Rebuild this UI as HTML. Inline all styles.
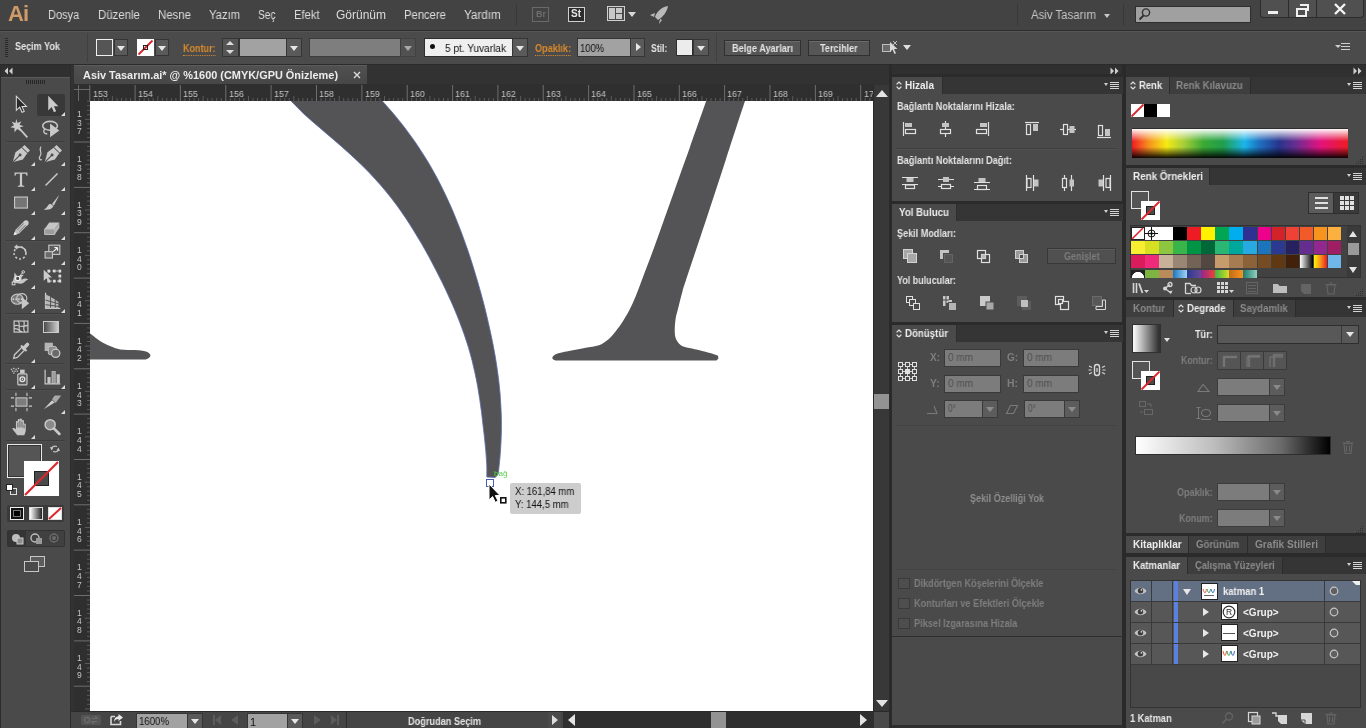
<!DOCTYPE html>
<html lang="tr"><head><meta charset="utf-8"><title>Asiv Tasarım.ai</title>
<style>
html,body{margin:0;padding:0}
body{width:1366px;height:728px;overflow:hidden;background:#4a4a4a;position:relative;font-family:"Liberation Sans",sans-serif;font-size:11px;color:#dcdcdc}
.a{position:absolute}
.t{position:absolute;white-space:nowrap;line-height:1;color:#dedede;transform-origin:0 0;will-change:transform}
.b{font-weight:bold}
.dim{color:#8c8c8c}
svg{position:absolute;overflow:visible}
.dd{position:absolute;background:#5a5a5a;border:1px solid #353535;box-sizing:border-box}
.dd:after{content:"";position:absolute;left:50%;top:50%;margin:-2px 0 0 -4px;border:4px solid transparent;border-top:5px solid #e6e6e6;border-bottom:0}
.fld{position:absolute;background:#a2a2a2;border:1px solid #353535;box-sizing:border-box}
.fldd{position:absolute;background:#7e7e7e;border:1px solid #3d3d3d;box-sizing:border-box}
.btn{position:absolute;border:1px solid #303030;background:#565656;box-sizing:border-box;box-shadow:inset 0 1px 0 #6a6a6a}
.ph{position:absolute;background:#383838;height:16px}
.tab{position:absolute;background:#4a4a4a;height:17px;top:0}
.hl{position:absolute;height:1px;background:#3a3a3a}
</style></head><body>
<!-- MENU BAR -->
<div class="a" style="left:0;top:0;width:1366px;height:30px;background:#434343"></div>
<div class="a" style="left:0;top:30px;width:1366px;height:1px;background:#2c2c2c"></div>
<div class="t b" style="left:8px;top:3px;font-size:22px;color:#cf9a68;letter-spacing:-1px">Ai</div>
<div class="t" style="transform:scaleX(0.920);left:47.5px;top:8.6px;font-size:12px;color:#dcdcdc;">Dosya</div>
<div class="t" style="transform:scaleX(0.952);left:97.5px;top:8.6px;font-size:12px;color:#dcdcdc;">Düzenle</div>
<div class="t" style="transform:scaleX(0.951);left:158.0px;top:8.6px;font-size:12px;color:#dcdcdc;">Nesne</div>
<div class="t" style="transform:scaleX(0.942);left:209.0px;top:8.6px;font-size:12px;color:#dcdcdc;">Yazım</div>
<div class="t" style="transform:scaleX(0.841);left:258.4px;top:8.6px;font-size:12px;color:#dcdcdc;">Seç</div>
<div class="t" style="transform:scaleX(0.936);left:293.7px;top:8.6px;font-size:12px;color:#dcdcdc;">Efekt</div>
<div class="t" style="transform:scaleX(0.993);left:336.3px;top:8.6px;font-size:12px;color:#dcdcdc;">Görünüm</div>
<div class="t" style="transform:scaleX(0.937);left:404.4px;top:8.6px;font-size:12px;color:#dcdcdc;">Pencere</div>
<div class="t" style="transform:scaleX(0.974);left:464.2px;top:8.6px;font-size:12px;color:#dcdcdc;">Yardım</div>
<div class="a" style="left:516px;top:4px;width:1px;height:22px;background:#383838"></div>
<!-- Br / St -->
<div class="a" style="left:532px;top:7px;width:15px;height:13px;border:1px solid #6a6a6a"></div>
<div class="t b" style="left:536px;top:10px;font-size:9px;color:#6e6e6e">Br</div>
<div class="a" style="left:568px;top:7px;width:15px;height:13px;border:1px solid #cfcfcf;background:#2c2c2c"></div>
<div class="t b" style="left:571px;top:9px;font-size:10px;color:#e6e6e6">St</div>
<!-- arrange docs -->
<div class="a" style="left:607px;top:6px;width:16px;height:13px;border:1px solid #d0d0d0;background:#4a4a4a"></div>
<div class="a" style="left:609px;top:8px;width:6px;height:11px;background:#c8c8c8"></div>
<div class="a" style="left:616px;top:8px;width:6px;height:5px;background:#c8c8c8"></div>
<div class="a" style="left:616px;top:14px;width:6px;height:5px;background:#c8c8c8"></div>
<div class="a" style="left:628px;top:12px;border:4px solid transparent;border-top:5px solid #d8d8d8;border-bottom:0"></div>
<!-- rocket -->
<svg style="left:648px;top:5px" width="22" height="20" viewBox="0 0 22 20"><path d="M20 1 C14 2 9 6 7 12 L10 15 C15 12 19 7 20 1Z M7 8 L2 10 L6 12Z M12 14 L11 19 L14 15Z" fill="#b9b9b9"/></svg>
<!-- workspace -->
<div class="a" style="left:1017px;top:4px;width:1px;height:22px;background:#383838"></div>
<div class="t" style="transform:scaleX(0.949);left:1030.5px;top:8.6px;font-size:12px;color:#c4c4c4;">Asiv Tasarım</div>
<div class="a" style="left:1104px;top:14px;border:3px solid transparent;border-top:4px solid #c8c8c8;border-bottom:0"></div>
<div class="a" style="left:1123px;top:4px;width:1px;height:22px;background:#383838"></div>
<div class="a" style="left:1135px;top:6px;width:116px;height:17px;background:#a0a0a0;border:1px solid #2e2e2e;box-sizing:border-box"></div>
<svg style="left:1138px;top:7px" width="14" height="14" viewBox="0 0 14 14"><circle cx="8" cy="5.5" r="3.6" fill="none" stroke="#2e2e2e" stroke-width="1.4"/><path d="M5.5 8.5 L1.5 12.5" stroke="#2e2e2e" stroke-width="1.8"/></svg>
<!-- window buttons -->
<div class="a" style="left:1260px;top:0;width:104px;height:18px;background:#505050;border:1px solid #2c2c2c;border-top:0;border-radius:0 0 4px 4px;box-sizing:border-box"></div>
<div class="a" style="left:1288px;top:0;width:1px;height:17px;background:#2c2c2c"></div>
<div class="a" style="left:1316px;top:0;width:1px;height:17px;background:#2c2c2c"></div>
<div class="a" style="left:1268px;top:11px;width:10px;height:3px;background:#f0f0f0"></div>
<div class="a" style="left:1296px;top:8px;width:7px;height:5px;border:2px solid #f0f0f0;box-sizing:content-box"></div>
<div class="a" style="left:1300px;top:4px;width:7px;height:5px;border:2px solid #f0f0f0;border-left:0;border-bottom:0"></div>
<svg style="left:1334px;top:3px" width="12" height="12" viewBox="0 0 12 12"><path d="M1 1 L11 11 M11 1 L1 11" stroke="#f4f4f4" stroke-width="2.4"/></svg>

<!-- CONTROL BAR -->
<div class="a" style="left:0;top:31px;width:1366px;height:34px;background:#4b4b4b"></div>
<div class="a" style="left:0;top:31px;width:1366px;height:1px;background:#565656"></div>
<div class="a" style="left:0;top:64px;width:1366px;height:1px;background:#2b2b2b"></div>
<div class="a" style="left:5px;top:38px;width:3px;height:19px;background:repeating-linear-gradient(#2a2a2a 0 1px,transparent 1px 2px)"></div>
<div class="t b" style="transform:scaleX(0.906);left:15.0px;top:41.7px;font-size:10px;color:#e4e4e4;">Seçim Yok</div>
<div class="a" style="left:87px;top:33px;width:1px;height:29px;background:#404040"></div>
<div class="a" style="left:96px;top:39px;width:17px;height:17px;box-sizing:border-box;border:1px solid #efefef;background:#555"></div>
<div class="dd" style="left:114px;top:39px;width:14px;height:17px"></div>
<div class="a" style="left:137px;top:39px;width:17px;height:17px;background:#fff"></div>
<svg style="left:137px;top:39px" width="17" height="17" viewBox="0 0 17 17"><path d="M1.5 15.5 L15.5 1.5" stroke="#d8232a" stroke-width="1.8"/><rect x="6.5" y="6.5" width="4" height="4" fill="none" stroke="#222" stroke-width="1"/></svg>
<div class="dd" style="left:155px;top:39px;width:14px;height:17px"></div>
<div class="t b" style="transform:scaleX(0.900);left:183.0px;top:43.8px;font-size:10px;color:#d98a2c;border-bottom:1px dotted #d98a2c;padding-bottom:1px">Kontur:</div>
<div class="a" style="left:222px;top:38px;width:17px;height:19px;background:#555;border:1px solid #353535;box-sizing:border-box"></div>
<div class="a" style="left:226px;top:41px;border:4px solid transparent;border-bottom:4px solid #ddd;border-top:0"></div>
<div class="a" style="left:226px;top:50px;border:4px solid transparent;border-top:4px solid #ddd;border-bottom:0"></div>
<div class="fld" style="left:239px;top:38px;width:48px;height:19px"></div>
<div class="dd" style="left:286px;top:38px;width:16px;height:19px"></div>
<div class="fldd" style="left:309px;top:38px;width:92px;height:19px"></div>
<div class="dd" style="left:400px;top:38px;width:16px;height:19px;background:#565656;border-color:#3d3d3d;opacity:.6"></div>
<div class="a" style="left:424px;top:38px;width:89px;height:19px;background:#efefef;border:1px solid #2e2e2e;box-sizing:border-box"></div>
<div class="a" style="left:430px;top:44px;width:5px;height:5px;border-radius:3px;background:#111"></div>
<div class="t" style="transform:scaleX(0.918);left:445.0px;top:43.0px;font-size:11px;color:#111;">5 pt. Yuvarlak</div>
<div class="dd" style="left:512px;top:38px;width:16px;height:19px"></div>
<div class="t b" style="transform:scaleX(0.912);left:535.0px;top:43.8px;font-size:10px;color:#d98a2c;border-bottom:1px dotted #d98a2c;padding-bottom:1px">Opaklık:</div>
<div class="fld" style="left:577px;top:38px;width:54px;height:19px"></div>
<div class="t" style="transform:scaleX(0.860);left:580.4px;top:42.7px;font-size:11px;color:#111;">100%</div>
<div class="a" style="left:630px;top:38px;width:15px;height:19px;background:#5a5a5a;border:1px solid #353535;box-sizing:border-box"></div>
<div class="a" style="left:636px;top:43px;border:4px solid transparent;border-left:5px solid #e6e6e6;border-right:0"></div>
<div class="t b" style="transform:scaleX(0.863);left:651.0px;top:43.8px;font-size:10px;color:#e4e4e4;">Stil:</div>
<div class="a" style="left:676px;top:39px;width:17px;height:17px;background:#ececec;border:1px solid #2e2e2e;box-sizing:border-box"></div>
<div class="dd" style="left:693px;top:39px;width:16px;height:17px"></div>
<div class="a" style="left:716px;top:33px;width:1px;height:29px;background:#404040"></div>
<div class="btn" style="left:724px;top:40px;width:77px;height:16px"></div>
<div class="t b" style="transform:scaleX(0.917);left:731.5px;top:43.8px;font-size:10px;color:#e4e4e4;">Belge Ayarları</div>
<div class="btn" style="left:808px;top:40px;width:62px;height:16px"></div>
<div class="t b" style="transform:scaleX(0.908);left:820.3px;top:43.8px;font-size:10px;color:#e4e4e4;">Tercihler</div>
<svg style="left:881px;top:40px" width="18" height="16" viewBox="0 0 18 16"><rect x="1.5" y="4.500" width="8" height="7" fill="#6a6a6a" stroke="#bdbdbd"/><path d="M9 2 L9 12 L11.500 9.500 L13.500 14 L15 13.300 L13 9 L16.500 9Z" fill="#d8d8d8"/><path d="M12 1 L16 5 M16 1 L12 5" stroke="#bdbdbd" stroke-width="1"/></svg>
<div class="a" style="left:903px;top:45px;border:4px solid transparent;border-top:5px solid #e0e0e0;border-bottom:0"></div>
<!-- far right menu icon -->
<div class="a" style="left:1335px;top:45px;border:3px solid transparent;border-top:3px solid #d0d0d0;border-bottom:0"></div>
<div class="a" style="left:1341px;top:43px;width:9px;height:9px;background:repeating-linear-gradient(#d0d0d0 0 1px,transparent 1px 3px)"></div>
<!-- TOOLS PANEL -->
<div class="a" style="left:0;top:65px;width:71px;height:663px;background:#4a4a4a"></div>
<div class="a" style="left:0;top:65px;width:71px;height:12px;background:#303030"></div>
<div class="a" style="left:0;top:65px;width:1px;height:663px;background:#2c2c2c"></div>
<div class="a" style="left:70px;top:65px;width:1px;height:663px;background:#2c2c2c"></div>
<div class="a" style="left:1px;top:77px;width:69px;height:1px;background:#5a5a5a"></div>
<svg style="left:4px;top:67px" width="10" height="8" viewBox="0 0 10 8"><path d="M4 0.500V7.500L0.500 4ZM8.500 0.500V7.500L5 4Z" fill="#d0d0d0"/></svg>
<div class="a" style="left:26px;top:80px;width:19px;height:4px;background:repeating-linear-gradient(90deg,#262626 0 1px,transparent 1px 2px)"></div>
<div class="a" style="left:37px;top:94px;width:28px;height:22px;background:#383838;border-radius:2px"></div>
<div class="a" style="left:6px;top:141px;width:59px;height:1px;background:#3c3c3c"></div>
<div class="a" style="left:6px;top:142px;width:59px;height:1px;background:#4f4f4f"></div>
<div class="a" style="left:6px;top:240px;width:59px;height:1px;background:#3c3c3c"></div>
<div class="a" style="left:6px;top:241px;width:59px;height:1px;background:#4f4f4f"></div>
<div class="a" style="left:6px;top:313px;width:59px;height:1px;background:#3c3c3c"></div>
<div class="a" style="left:6px;top:314px;width:59px;height:1px;background:#4f4f4f"></div>
<div class="a" style="left:6px;top:363px;width:59px;height:1px;background:#3c3c3c"></div>
<div class="a" style="left:6px;top:364px;width:59px;height:1px;background:#4f4f4f"></div>
<div class="a" style="left:6px;top:389px;width:59px;height:1px;background:#3c3c3c"></div>
<div class="a" style="left:6px;top:390px;width:59px;height:1px;background:#4f4f4f"></div>
<div class="a" style="left:6px;top:440px;width:59px;height:1px;background:#3c3c3c"></div>
<div class="a" style="left:6px;top:441px;width:59px;height:1px;background:#4f4f4f"></div>
<svg style="left:8px;top:92px" width="24" height="24" viewBox="0 0 24 24"><g transform="translate(12 12) scale(.92) translate(-12 -12)"><path d="M8 3.500V19L11.700 15.500L14.200 21L16.600 20L14.200 14.700H19Z" fill="#2a2a2a" stroke="#dcdcdc" stroke-width="1.100"/></g></svg>
<svg style="left:39px;top:92px" width="24" height="24" viewBox="0 0 24 24"><g transform="translate(12 12) scale(.92) translate(-12 -12)"><path d="M9 3V19L12.700 15.300L15.200 21L17.600 20L15.200 14.500H20Z" fill="#cacaca"/></g></svg>
<svg style="left:60.5px;top:111.5px" width="4" height="4" viewBox="0 0 4 4"><path d="M4 0V4H0Z" fill="#dcdcdc"/></svg>
<svg style="left:8px;top:117px" width="24" height="24" viewBox="0 0 24 24"><g transform="translate(12 12) scale(.92) translate(-12 -12)"><path d="M10 10L20 21" stroke="#c6c6c6" stroke-width="2"/><path d="M8 1L9.300 5.500L13.500 3.500L11.500 7.500L16 9L11.500 10.300L13 14.500L9 12L6 15.500L6 11L1.500 10L5.500 8L3 4L7 5.500Z" fill="#cccccc"/></g></svg>
<svg style="left:39px;top:117px" width="24" height="24" viewBox="0 0 24 24"><g transform="translate(12 12) scale(.92) translate(-12 -12)"><ellipse cx="11" cy="8.500" rx="8" ry="4.800" fill="none" stroke="#c6c6c6" stroke-width="1.700"/><path d="M5 12C3 15 5 18 8 17" fill="none" stroke="#c6c6c6" stroke-width="1.500"/><path d="M11 6V21L21 13.500Z" fill="#c8c8c8"/></g></svg>
<svg style="left:9px;top:142px" width="24" height="24" viewBox="0 0 24 24"><g transform="translate(12 12) scale(.92) translate(-12 -12)"><path d="M3 21L6 10L13 5L19 11L14 18Z" fill="#c8c8c8"/><path d="M3 21L10.500 13.500" stroke="#4a4a4a" stroke-width="1.200"/><circle cx="11" cy="13" r="1.600" fill="#4a4a4a"/><path d="M14.500 3.500L20.500 9.500" stroke="#c8c8c8" stroke-width="3.600"/><path d="M13.200 5.200L18.800 10.800" stroke="#4a4a4a" stroke-width="1"/></g></svg>
<svg style="left:30.5px;top:161.5px" width="4" height="4" viewBox="0 0 4 4"><path d="M4 0V4H0Z" fill="#dcdcdc"/></svg>
<svg style="left:41px;top:142px" width="24" height="24" viewBox="0 0 24 24"><g transform="translate(12 12) scale(.92) translate(-12 -12)"><path d="M3 21L6 10L13 5L19 11L14 18Z" fill="#c8c8c8"/><path d="M3 21L10.500 13.500" stroke="#4a4a4a" stroke-width="1.200"/><circle cx="11" cy="13" r="1.600" fill="#4a4a4a"/><path d="M14.500 3.500L20.500 9.500" stroke="#c8c8c8" stroke-width="3.600"/><path d="M13.200 5.200L18.800 10.800" stroke="#4a4a4a" stroke-width="1"/><path d="M4 2C1 6 6 8 3 12C1 15 3 17 5 16" fill="none" stroke="#c8c8c8" stroke-width="1.300" transform="translate(-5,2)"/></g></svg>
<svg style="left:60.5px;top:161.5px" width="4" height="4" viewBox="0 0 4 4"><path d="M4 0V4H0Z" fill="#dcdcdc"/></svg>
<svg style="left:9px;top:167px" width="24" height="24" viewBox="0 0 24 24"><g transform="translate(12 12) scale(.92) translate(-12 -12)"><path d="M5 5H19V8.500H18C17.800 7 17.200 6.300 16 6.300H13.200V18C13.200 19 13.800 19.300 15.500 19.400V20.500H8.500V19.400C10.200 19.300 10.800 19 10.800 18V6.300H8C6.800 6.300 6.200 7 6 8.500H5Z" fill="#cacaca"/></g></svg>
<svg style="left:30.5px;top:186.5px" width="4" height="4" viewBox="0 0 4 4"><path d="M4 0V4H0Z" fill="#dcdcdc"/></svg>
<svg style="left:40px;top:167px" width="24" height="24" viewBox="0 0 24 24"><g transform="translate(12 12) scale(.92) translate(-12 -12)"><path d="M5 19L18 6" stroke="#cacaca" stroke-width="1.600"/></g></svg>
<svg style="left:60.5px;top:186.5px" width="4" height="4" viewBox="0 0 4 4"><path d="M4 0V4H0Z" fill="#dcdcdc"/></svg>
<svg style="left:9px;top:191px" width="24" height="24" viewBox="0 0 24 24"><g transform="translate(12 12) scale(.92) translate(-12 -12)"><rect x="5" y="5.500" width="14" height="12" fill="#757575" stroke="#c6c6c6" stroke-width="1.200"/></g></svg>
<svg style="left:30.5px;top:210.5px" width="4" height="4" viewBox="0 0 4 4"><path d="M4 0V4H0Z" fill="#dcdcdc"/></svg>
<svg style="left:40px;top:191px" width="24" height="24" viewBox="0 0 24 24"><g transform="translate(12 12) scale(.92) translate(-12 -12)"><path d="M20 3L12 13L14 15Z" fill="#c8c8c8"/><path d="M11.500 13.500L13.500 15.500C12 19 7 20 3 19C6 18 7 15 8.500 13.500C9.500 12.800 10.800 12.800 11.500 13.500Z" fill="#c8c8c8"/></g></svg>
<svg style="left:60.5px;top:210.5px" width="4" height="4" viewBox="0 0 4 4"><path d="M4 0V4H0Z" fill="#dcdcdc"/></svg>
<svg style="left:9px;top:216px" width="24" height="24" viewBox="0 0 24 24"><g transform="translate(12 12) scale(.92) translate(-12 -12)"><path d="M4 20L6 14L15 5L19 9L10 18Z" fill="#bdbdbd"/><path d="M4 20L5.200 16.200L7.800 18.800Z" fill="#eee"/><circle cx="17.500" cy="6.500" r="2.800" fill="#cccccc"/><path d="M8 14L15 7M10 16L17 9" stroke="#777" stroke-width="1"/></g></svg>
<svg style="left:30.5px;top:235.5px" width="4" height="4" viewBox="0 0 4 4"><path d="M4 0V4H0Z" fill="#dcdcdc"/></svg>
<svg style="left:40px;top:216px" width="24" height="24" viewBox="0 0 24 24"><g transform="translate(12 12) scale(.92) translate(-12 -12)"><path d="M4 13L9 6H20L15 13Z" fill="#c6c6c6"/><path d="M4 13H15V19H4Z" fill="#9c9c9c" stroke="#c6c6c6" stroke-width="1"/><path d="M15 13L20 6V12L15 19Z" fill="#b4b4b4"/></g></svg>
<svg style="left:60.5px;top:235.5px" width="4" height="4" viewBox="0 0 4 4"><path d="M4 0V4H0Z" fill="#dcdcdc"/></svg>
<svg style="left:8px;top:241px" width="24" height="24" viewBox="0 0 24 24"><g transform="translate(12 12) scale(.92) translate(-12 -12)"><circle cx="12" cy="12" r="6.500" fill="none" stroke="#c6c6c6" stroke-width="1.700" stroke-dasharray="2.200 2.200"/><path d="M12 5.500A6.500 6.500 0 0 1 18.500 12" fill="none" stroke="#c6c6c6" stroke-width="1.800"/><path d="M7 2.500V8.500L3.500 5.500Z" fill="#cacaca" transform="translate(2,0)"/><path d="M8 5.500H12" stroke="#c6c6c6" stroke-width="1.800"/></g></svg>
<svg style="left:30.5px;top:260.5px" width="4" height="4" viewBox="0 0 4 4"><path d="M4 0V4H0Z" fill="#dcdcdc"/></svg>
<svg style="left:40px;top:241px" width="24" height="24" viewBox="0 0 24 24"><g transform="translate(12 12) scale(.92) translate(-12 -12)"><rect x="8.500" y="3.500" width="12" height="10" fill="#5c5c5c" stroke="#c8c8c8" stroke-width="1.200"/><rect x="4.500" y="10.500" width="8" height="7" fill="#6a6a6a" stroke="#c8c8c8" stroke-width="1.200"/><path d="M13.500 10.500L18 6M18 6H14.500M18 6V9.500" stroke="#f0f0f0" stroke-width="1.300" fill="none"/></g></svg>
<svg style="left:60.5px;top:260.5px" width="4" height="4" viewBox="0 0 4 4"><path d="M4 0V4H0Z" fill="#dcdcdc"/></svg>
<svg style="left:8px;top:265px" width="24" height="24" viewBox="0 0 24 24"><g transform="translate(12 12) scale(.92) translate(-12 -12)"><path d="M3 19C5 15 6 12 6 7C8 9 9 11 9 13C11 10 14 9 16 10C14 11 13 13 14 15C16 13 19 13 21 15C18 15 17 19 14 19C10 20 7 17 3 19Z" fill="#c6c6c6"/><circle cx="9.500" cy="13.500" r="2.300" fill="#4a4a4a" stroke="#eee" stroke-width="1.200"/><path d="M11 12L15 7" stroke="#ddd" stroke-width="1"/><circle cx="15.500" cy="6.500" r="1.400" fill="none" stroke="#ddd"/><rect x="3.500" y="17.500" width="3" height="3" fill="#4a4a4a" stroke="#ddd"/></g></svg>
<svg style="left:30.5px;top:284.5px" width="4" height="4" viewBox="0 0 4 4"><path d="M4 0V4H0Z" fill="#dcdcdc"/></svg>
<svg style="left:40px;top:265px" width="24" height="24" viewBox="0 0 24 24"><g transform="translate(12 12) scale(.92) translate(-12 -12)"><rect x="8.500" y="5.500" width="12" height="11" fill="none" stroke="#c6c6c6" stroke-width="1.200" stroke-dasharray="2 2"/><g fill="#dcdcdc"><rect x="7" y="4" width="3" height="3"/><rect x="19" y="4" width="3" height="3"/><rect x="7" y="15" width="3" height="3"/><rect x="19" y="15" width="3" height="3"/><rect x="13" y="4" width="3" height="3"/><rect x="13" y="15" width="3" height="3"/><rect x="19" y="9.500" width="3" height="3"/></g><path d="M3 4V16L6 13.300L8 17.500L10 16.600L8 12.500H12Z" fill="#cccccc"/></g></svg>
<svg style="left:8px;top:289px" width="24" height="24" viewBox="0 0 24 24"><g transform="translate(12 12) scale(.92) translate(-12 -12)"><ellipse cx="9" cy="10" rx="6.500" ry="5.500" fill="#7a7a7a" stroke="#c6c6c6" stroke-width="1.200"/><ellipse cx="14" cy="9" rx="5.500" ry="5" fill="none" stroke="#c6c6c6" stroke-width="1.200"/><path d="M4 10H15" stroke="#eee" stroke-width="1.500" stroke-dasharray="1.500 1.500"/><path d="M14 8V21L22 14.500Z" fill="#c8c8c8"/></g></svg>
<svg style="left:30.5px;top:308.5px" width="4" height="4" viewBox="0 0 4 4"><path d="M4 0V4H0Z" fill="#dcdcdc"/></svg>
<svg style="left:40px;top:289px" width="24" height="24" viewBox="0 0 24 24"><g transform="translate(12 12) scale(.92) translate(-12 -12)"><path d="M5 3V20H21" fill="none" stroke="#cacaca" stroke-width="1.400"/><path d="M5 5L10 7V20H5ZM11 8L15 10V20H11ZM16 11L19 13V20H16Z" fill="#b9b9b9"/><path d="M5 11L19 15M5 16L20 18" stroke="#4a4a4a" stroke-width="1"/></g></svg>
<svg style="left:60.5px;top:308.5px" width="4" height="4" viewBox="0 0 4 4"><path d="M4 0V4H0Z" fill="#dcdcdc"/></svg>
<svg style="left:9px;top:315px" width="24" height="24" viewBox="0 0 24 24"><g transform="translate(12 12) scale(.92) translate(-12 -12)"><rect x="4.500" y="5.500" width="15" height="12" fill="none" stroke="#cacaca" stroke-width="1.300"/><path d="M4.500 11C8 8 11 14 19.500 10M9 5.500C12 9 8 13 11 17.500M15 5.500C17 9 13 13 16 17.500M4.500 14C8 13 10 16 13 17.500" fill="none" stroke="#cacaca" stroke-width="1.300"/></g></svg>
<div class="a" style="left:43px;top:321px;width:16px;height:12px;border:1px solid #cacaca;box-sizing:border-box;background:linear-gradient(90deg,#4a4a4a,#cccccc)"></div>
<svg style="left:9px;top:339px" width="24" height="24" viewBox="0 0 24 24"><g transform="translate(12 12) scale(.92) translate(-12 -12)"><path d="M4 20L5 16L13 8L16 11L8 19Z" fill="none" stroke="#c8c8c8" stroke-width="1.400"/><path d="M12 6L18 12" stroke="#c8c8c8" stroke-width="2.200"/><path d="M15 9L19 5" stroke="#c8c8c8" stroke-width="4" stroke-linecap="round"/></g></svg>
<svg style="left:30.5px;top:358.5px" width="4" height="4" viewBox="0 0 4 4"><path d="M4 0V4H0Z" fill="#dcdcdc"/></svg>
<svg style="left:40px;top:339px" width="24" height="24" viewBox="0 0 24 24"><g transform="translate(12 12) scale(.92) translate(-12 -12)"><rect x="4" y="3" width="9" height="9" fill="#b4b4b4"/><rect x="8" y="7" width="9" height="9" rx="2" fill="#8c8c8c" stroke="#c6c6c6"/><circle cx="16" cy="14.500" r="4.500" fill="#6a6a6a" stroke="#cacaca" stroke-width="1.400"/></g></svg>
<svg style="left:9px;top:365px" width="24" height="24" viewBox="0 0 24 24"><g transform="translate(12 12) scale(.92) translate(-12 -12)"><rect x="8.500" y="8.500" width="10" height="12" rx="1" fill="#5c5c5c" stroke="#c8c8c8" stroke-width="1.300"/><rect x="11" y="4" width="5" height="4" fill="#c8c8c8"/><circle cx="13.500" cy="14.500" r="2.600" fill="none" stroke="#e4e4e4" stroke-width="1.400"/><circle cx="13.500" cy="14.500" r=".8" fill="#eee"/><g fill="#cccccc"><rect x="1" y="3" width="1.400" height="1.400"/><rect x="3.500" y="2" width="1.400" height="1.400"/><rect x="6" y="3" width="1.400" height="1.400"/><rect x="2.200" y="5" width="1.400" height="1.400"/><rect x="4.800" y="5" width="1.400" height="1.400"/><rect x="7.300" y="5" width="1.400" height="1.400"/><rect x="3.500" y="7" width="1.400" height="1.400"/><rect x="8.500" y="2" width="1.400" height="1.400"/></g></g></svg>
<svg style="left:30.5px;top:384.5px" width="4" height="4" viewBox="0 0 4 4"><path d="M4 0V4H0Z" fill="#dcdcdc"/></svg>
<svg style="left:40px;top:365px" width="24" height="24" viewBox="0 0 24 24"><g transform="translate(12 12) scale(.92) translate(-12 -12)"><path d="M4.500 4V19.500H21" fill="none" stroke="#cacaca" stroke-width="1.300"/><rect x="7" y="12" width="3.500" height="7" fill="#c6c6c6"/><rect x="12" y="6" width="3.500" height="13" fill="#9a9a9a" stroke="#c6c6c6" stroke-width=".8"/><rect x="17" y="9" width="3.500" height="10" fill="#c6c6c6"/></g></svg>
<svg style="left:60.5px;top:384.5px" width="4" height="4" viewBox="0 0 4 4"><path d="M4 0V4H0Z" fill="#dcdcdc"/></svg>
<svg style="left:9px;top:390px" width="24" height="24" viewBox="0 0 24 24"><g transform="translate(12 12) scale(.92) translate(-12 -12)"><rect x="6.500" y="7.500" width="12" height="9" fill="#7c7c7c" stroke="#cacaca" stroke-width="1.100"/><path d="M1 7.500H4.500M20.500 7.500H24M1 16.500H4.500M20.500 16.500H24M6.500 2V5.500M18.500 2V5.500M6.500 18.500V22M18.500 18.500V22" stroke="#cacaca" stroke-width="1.200"/></g></svg>
<svg style="left:40px;top:390px" width="24" height="24" viewBox="0 0 24 24"><g transform="translate(12 12) scale(.92) translate(-12 -12)"><path d="M3 20L12 10L15 12.500Z" fill="#cccccc"/><path d="M12 9L15 5H22L16 13Z" fill="#a8a8a8"/></g></svg>
<svg style="left:60.5px;top:409.5px" width="4" height="4" viewBox="0 0 4 4"><path d="M4 0V4H0Z" fill="#dcdcdc"/></svg>
<svg style="left:9px;top:415px" width="24" height="24" viewBox="0 0 24 24"><g transform="translate(12 12) scale(.92) translate(-12 -12)"><path d="M8 21C6 18 4 16 2.500 13.500C3.500 12.500 5 13 6.500 14.500V6.500C6.500 5 8.500 5 8.500 6.500V4.500C8.500 3 10.700 3 10.700 4.500V4C10.700 2.500 13 2.500 13 4V5.500C13 4 15.200 4 15.200 5.500V9C15.200 7.800 17.200 7.800 17.200 9V15C17.200 18 16 19.500 15.500 21Z" fill="#c6c6c6"/><path d="M8.600 7V12.500M10.800 5V12.500M13.100 6V12.500M15.300 9.500V13.500" stroke="#4a4a4a" stroke-width=".9"/></g></svg>
<svg style="left:30.5px;top:434.5px" width="4" height="4" viewBox="0 0 4 4"><path d="M4 0V4H0Z" fill="#dcdcdc"/></svg>
<svg style="left:40px;top:415px" width="24" height="24" viewBox="0 0 24 24"><g transform="translate(12 12) scale(.92) translate(-12 -12)"><circle cx="10" cy="9.500" r="5.500" fill="#8a8a8a" stroke="#c8c8c8" stroke-width="1.600"/><path d="M14 13.500L20 19.500" stroke="#c8c8c8" stroke-width="3" stroke-linecap="round"/></g></svg>
<div class="a" style="left:7px;top:444px;width:35px;height:34px;box-sizing:border-box;border:1px solid #e8e8e8;background:#555;box-shadow:inset 0 0 0 1px #333"></div>
<div class="a" style="left:24px;top:461px;width:35px;height:35px;background:#fff"></div>
<div class="a" style="left:34px;top:471px;width:15px;height:15px;background:#4a4a4a;border:1px solid #222;box-sizing:border-box"></div>
<svg style="left:24px;top:461px" width="35" height="35" viewBox="0 0 35 35"><path d="M1 34L34 1" stroke="#e0242c" stroke-width="2.200"/></svg>
<svg style="left:49px;top:443px" width="12" height="12" viewBox="0 0 12 12"><path d="M2.500 6C2.500 3.500 5 2.500 8 3.500M9.500 6C9.500 8.500 7 9.500 4 8.500" fill="none" stroke="#c8c8c8" stroke-width="1.200"/><path d="M1 4L2.500 7.500L4.500 4.500ZM11 8L9.500 4.500L7.500 7.500Z" fill="#c8c8c8"/></svg>
<div class="a" style="left:10px;top:488px;width:7px;height:7px;background:#4a4a4a;border:1px solid #e0e0e0;box-sizing:border-box"></div>
<div class="a" style="left:6px;top:484px;width:7px;height:7px;background:#fff;border:1px solid #222;box-sizing:border-box"></div>
<div class="a" style="left:7px;top:505px;width:57px;height:17px;background:#3a3a3a;border-radius:2px"></div>
<div class="a" style="left:10px;top:507px;width:14px;height:13px;background:#111;border:1px solid #eee;box-sizing:border-box"></div>
<div class="a" style="left:13px;top:510px;width:8px;height:7px;background:#000;border:1px solid #777;box-sizing:border-box"></div>
<div class="a" style="left:29px;top:507px;width:14px;height:13px;background:linear-gradient(90deg,#fff,#222);border:1px solid #ddd;box-sizing:border-box"></div>
<div class="a" style="left:48px;top:507px;width:14px;height:13px;background:#fff;border:1px solid #ddd;box-sizing:border-box"></div>
<svg style="left:48px;top:507px" width="14" height="13" viewBox="0 0 14 13"><path d="M1 12L13 1" stroke="#e0242c" stroke-width="2"/></svg>
<div class="a" style="left:7px;top:530px;width:58px;height:17px;background:#404040;border:1px solid #323232;box-sizing:border-box;border-radius:2px"></div>
<div class="a" style="left:8px;top:531px;width:18px;height:15px;background:#343434"></div>
<svg style="left:9px;top:531px" width="56" height="15" viewBox="0 0 56 15"><circle cx="7" cy="7" r="4" fill="#bdbdbd"/><rect x="8" y="7" width="6" height="6" fill="#8c8c8c" stroke="#cccccc"/><circle cx="26" cy="7" r="4" fill="none" stroke="#bdbdbd" stroke-width="1.400"/><rect x="27" y="7" width="6" height="6" fill="#9a9a9a"/><circle cx="45" cy="7" r="4" fill="none" stroke="#6a6a6a" stroke-width="1.400"/><circle cx="45" cy="7" r="2" fill="#6a6a6a"/></svg>
<div class="a" style="left:30px;top:556px;width:15px;height:11px;background:#5c5c5c;border:1px solid #c6c6c6;box-sizing:border-box"></div>
<div class="a" style="left:24px;top:561px;width:15px;height:11px;background:#4a4a4a;border:1px solid #c6c6c6;box-sizing:border-box"></div>
<!-- DOCUMENT AREA -->
<div class="a" style="left:71px;top:65px;width:821px;height:663px;background:#323232"></div>
<div class="a" style="left:74px;top:65px;width:293px;height:19px;background:linear-gradient(#505050,#474747);border-top:1px solid #5c5c5c;box-sizing:border-box"></div>
<div class="t b" style="transform:scaleX(1.040);left:82.5px;top:70.0px;font-size:10.5px;color:#ececec;">Asiv Tasarım.ai* @ %1600 (CMYK/GPU Önizleme)</div>
<svg style="left:353px;top:71px" width="8" height="8" viewBox="0 0 8 8"><path d="M1 1 L7 7 M7 1 L1 7" stroke="#e0e0e0" stroke-width="1.3"/></svg>
<div class="a" style="left:74px;top:84px;width:800px;height:17px;background:#2f2f2f"></div>
<div class="a" style="left:74px;top:101px;width:16px;height:610px;background:#2f2f2f"></div>
<div class="a" style="left:90px;top:101px;width:784px;height:610px;background:#fff"></div>
<svg style="left:0;top:0" width="1366" height="728"><path d="M89.8 85V101M135.1 85V101M180.4 85V101M225.8 85V101M271.1 85V101M316.5 85V101M361.9 85V101M407.2 85V101M452.6 85V101M497.9 85V101M543.2 85V101M588.6 85V101M634.0 85V101M679.3 85V101M724.6 85V101M770.0 85V101M815.4 85V101M860.7 85V101M74 142.0H90M74 187.4H90M74 232.7H90M74 278.1H90M74 323.4H90M74 368.8H90M74 414.1H90M74 459.5H90M74 504.8H90M74 550.1H90M74 595.5H90M74 640.9H90M74 686.2H90" stroke="#6e6e6e" stroke-width="1" fill="none"/><path d="M94.3 98V101M98.8 98V101M103.4 98V101M107.9 98V101M112.4 96V101M117.0 98V101M121.5 98V101M126.0 98V101M130.6 98V101M139.6 98V101M144.2 98V101M148.7 98V101M153.2 98V101M157.8 96V101M162.3 98V101M166.8 98V101M171.4 98V101M175.9 98V101M185.0 98V101M189.5 98V101M194.1 98V101M198.6 98V101M203.1 96V101M207.7 98V101M212.2 98V101M216.7 98V101M221.3 98V101M230.3 98V101M234.9 98V101M239.4 98V101M243.9 98V101M248.5 96V101M253.0 98V101M257.5 98V101M262.1 98V101M266.6 98V101M275.7 98V101M280.2 98V101M284.8 98V101M289.3 98V101M293.8 96V101M298.4 98V101M302.9 98V101M307.4 98V101M312.0 98V101M321.0 98V101M325.6 98V101M330.1 98V101M334.6 98V101M339.2 96V101M343.7 98V101M348.2 98V101M352.8 98V101M357.3 98V101M366.4 98V101M370.9 98V101M375.5 98V101M380.0 98V101M384.5 96V101M389.1 98V101M393.6 98V101M398.1 98V101M402.7 98V101M411.7 98V101M416.3 98V101M420.8 98V101M425.3 98V101M429.9 96V101M434.4 98V101M438.9 98V101M443.5 98V101M448.0 98V101M457.1 98V101M461.6 98V101M466.2 98V101M470.7 98V101M475.2 96V101M479.8 98V101M484.3 98V101M488.8 98V101M493.4 98V101M502.4 98V101M507.0 98V101M511.5 98V101M516.0 98V101M520.6 96V101M525.1 98V101M529.6 98V101M534.2 98V101M538.7 98V101M547.8 98V101M552.3 98V101M556.9 98V101M561.4 98V101M565.9 96V101M570.5 98V101M575.0 98V101M579.5 98V101M584.1 98V101M593.1 98V101M597.7 98V101M602.2 98V101M606.7 98V101M611.3 96V101M615.8 98V101M620.3 98V101M624.9 98V101M629.4 98V101M638.5 98V101M643.0 98V101M647.6 98V101M652.1 98V101M656.6 96V101M661.2 98V101M665.7 98V101M670.2 98V101M674.8 98V101M683.8 98V101M688.4 98V101M692.9 98V101M697.4 98V101M702.0 96V101M706.5 98V101M711.0 98V101M715.6 98V101M720.1 98V101M729.2 98V101M733.7 98V101M738.3 98V101M742.8 98V101M747.3 96V101M751.9 98V101M756.4 98V101M760.9 98V101M765.5 98V101M774.5 98V101M779.1 98V101M783.6 98V101M788.1 98V101M792.7 96V101M797.2 98V101M801.7 98V101M806.3 98V101M810.8 98V101M819.9 98V101M824.4 98V101M829.0 98V101M833.5 98V101M838.0 96V101M842.6 98V101M847.1 98V101M851.6 98V101M856.2 98V101M865.2 98V101M869.8 98V101M87 101.2H90M87 105.7H90M87 110.3H90M87 114.8H90M85 119.3H90M87 123.9H90M87 128.4H90M87 132.9H90M87 137.5H90M87 146.5H90M87 151.1H90M87 155.6H90M87 160.1H90M85 164.7H90M87 169.2H90M87 173.7H90M87 178.3H90M87 182.8H90M87 191.9H90M87 196.4H90M87 201.0H90M87 205.5H90M85 210.0H90M87 214.6H90M87 219.1H90M87 223.6H90M87 228.2H90M87 237.2H90M87 241.8H90M87 246.3H90M87 250.8H90M85 255.4H90M87 259.9H90M87 264.4H90M87 269.0H90M87 273.5H90M87 282.6H90M87 287.1H90M87 291.7H90M87 296.2H90M85 300.7H90M87 305.3H90M87 309.8H90M87 314.3H90M87 318.9H90M87 327.9H90M87 332.5H90M87 337.0H90M87 341.5H90M85 346.1H90M87 350.6H90M87 355.1H90M87 359.7H90M87 364.2H90M87 373.3H90M87 377.8H90M87 382.4H90M87 386.9H90M85 391.4H90M87 396.0H90M87 400.5H90M87 405.0H90M87 409.6H90M87 418.6H90M87 423.2H90M87 427.7H90M87 432.2H90M85 436.8H90M87 441.3H90M87 445.8H90M87 450.4H90M87 454.9H90M87 464.0H90M87 468.5H90M87 473.1H90M87 477.6H90M85 482.1H90M87 486.7H90M87 491.2H90M87 495.7H90M87 500.3H90M87 509.3H90M87 513.9H90M87 518.4H90M87 522.9H90M85 527.5H90M87 532.0H90M87 536.5H90M87 541.1H90M87 545.6H90M87 554.7H90M87 559.2H90M87 563.8H90M87 568.3H90M85 572.8H90M87 577.4H90M87 581.9H90M87 586.4H90M87 591.0H90M87 600.0H90M87 604.6H90M87 609.1H90M87 613.6H90M85 618.2H90M87 622.7H90M87 627.2H90M87 631.8H90M87 636.3H90M87 645.4H90M87 649.9H90M87 654.5H90M87 659.0H90M85 663.5H90M87 668.1H90M87 672.6H90M87 677.1H90M87 681.7H90M87 690.7H90M87 695.3H90M87 699.8H90M87 704.3H90M85 708.9H90" stroke="#5a5a5a" stroke-width="1" fill="none"/>
<path d="M74 89.500H90M78.500 85V101" stroke="#6a6a6a" stroke-width="1" fill="none"/></svg>
<div class="t" style="transform:scaleX(0.946);left:92.5px;top:88.7px;font-size:9.5px;color:#c4c4c4;">153</div>
<div class="t" style="transform:scaleX(0.946);left:137.9px;top:88.7px;font-size:9.5px;color:#c4c4c4;">154</div>
<div class="t" style="transform:scaleX(0.946);left:183.2px;top:88.7px;font-size:9.5px;color:#c4c4c4;">155</div>
<div class="t" style="transform:scaleX(0.946);left:228.6px;top:88.7px;font-size:9.5px;color:#c4c4c4;">156</div>
<div class="t" style="transform:scaleX(0.946);left:273.9px;top:88.7px;font-size:9.5px;color:#c4c4c4;">157</div>
<div class="t" style="transform:scaleX(0.946);left:319.3px;top:88.7px;font-size:9.5px;color:#c4c4c4;">158</div>
<div class="t" style="transform:scaleX(0.946);left:364.7px;top:88.7px;font-size:9.5px;color:#c4c4c4;">159</div>
<div class="t" style="transform:scaleX(0.946);left:410.0px;top:88.7px;font-size:9.5px;color:#c4c4c4;">160</div>
<div class="t" style="transform:scaleX(0.946);left:455.4px;top:88.7px;font-size:9.5px;color:#c4c4c4;">161</div>
<div class="t" style="transform:scaleX(0.946);left:500.7px;top:88.7px;font-size:9.5px;color:#c4c4c4;">162</div>
<div class="t" style="transform:scaleX(0.946);left:546.0px;top:88.7px;font-size:9.5px;color:#c4c4c4;">163</div>
<div class="t" style="transform:scaleX(0.946);left:591.4px;top:88.7px;font-size:9.5px;color:#c4c4c4;">164</div>
<div class="t" style="transform:scaleX(0.946);left:636.8px;top:88.7px;font-size:9.5px;color:#c4c4c4;">165</div>
<div class="t" style="transform:scaleX(0.946);left:682.1px;top:88.7px;font-size:9.5px;color:#c4c4c4;">166</div>
<div class="t" style="transform:scaleX(0.946);left:727.4px;top:88.7px;font-size:9.5px;color:#c4c4c4;">167</div>
<div class="t" style="transform:scaleX(0.946);left:772.8px;top:88.7px;font-size:9.5px;color:#c4c4c4;">168</div>
<div class="t" style="transform:scaleX(0.946);left:818.1px;top:88.7px;font-size:9.5px;color:#c4c4c4;">169</div>
<div class="t" style="transform:scaleX(0.945);left:863.5px;top:88.7px;font-size:9.5px;color:#c4c4c4;">17</div>
<div class="t" style="left:76.500px;top:109.8px;font-size:8.500px;color:#c4c4c4">1</div>
<div class="t" style="left:76.500px;top:118.5px;font-size:8.500px;color:#c4c4c4">3</div>
<div class="t" style="left:76.500px;top:127.2px;font-size:8.500px;color:#c4c4c4">7</div>
<div class="t" style="left:76.500px;top:155.2px;font-size:8.500px;color:#c4c4c4">1</div>
<div class="t" style="left:76.500px;top:163.9px;font-size:8.500px;color:#c4c4c4">3</div>
<div class="t" style="left:76.500px;top:172.6px;font-size:8.500px;color:#c4c4c4">8</div>
<div class="t" style="left:76.500px;top:200.5px;font-size:8.500px;color:#c4c4c4">1</div>
<div class="t" style="left:76.500px;top:209.2px;font-size:8.500px;color:#c4c4c4">3</div>
<div class="t" style="left:76.500px;top:217.9px;font-size:8.500px;color:#c4c4c4">9</div>
<div class="t" style="left:76.500px;top:245.9px;font-size:8.500px;color:#c4c4c4">1</div>
<div class="t" style="left:76.500px;top:254.6px;font-size:8.500px;color:#c4c4c4">4</div>
<div class="t" style="left:76.500px;top:263.3px;font-size:8.500px;color:#c4c4c4">0</div>
<div class="t" style="left:76.500px;top:291.2px;font-size:8.500px;color:#c4c4c4">1</div>
<div class="t" style="left:76.500px;top:299.9px;font-size:8.500px;color:#c4c4c4">4</div>
<div class="t" style="left:76.500px;top:308.6px;font-size:8.500px;color:#c4c4c4">1</div>
<div class="t" style="left:76.500px;top:336.6px;font-size:8.500px;color:#c4c4c4">1</div>
<div class="t" style="left:76.500px;top:345.3px;font-size:8.500px;color:#c4c4c4">4</div>
<div class="t" style="left:76.500px;top:354.0px;font-size:8.500px;color:#c4c4c4">2</div>
<div class="t" style="left:76.500px;top:381.9px;font-size:8.500px;color:#c4c4c4">1</div>
<div class="t" style="left:76.500px;top:390.6px;font-size:8.500px;color:#c4c4c4">4</div>
<div class="t" style="left:76.500px;top:399.3px;font-size:8.500px;color:#c4c4c4">3</div>
<div class="t" style="left:76.500px;top:427.3px;font-size:8.500px;color:#c4c4c4">1</div>
<div class="t" style="left:76.500px;top:436.0px;font-size:8.500px;color:#c4c4c4">4</div>
<div class="t" style="left:76.500px;top:444.7px;font-size:8.500px;color:#c4c4c4">4</div>
<div class="t" style="left:76.500px;top:472.6px;font-size:8.500px;color:#c4c4c4">1</div>
<div class="t" style="left:76.500px;top:481.3px;font-size:8.500px;color:#c4c4c4">4</div>
<div class="t" style="left:76.500px;top:490.0px;font-size:8.500px;color:#c4c4c4">5</div>
<div class="t" style="left:76.500px;top:518.0px;font-size:8.500px;color:#c4c4c4">1</div>
<div class="t" style="left:76.500px;top:526.7px;font-size:8.500px;color:#c4c4c4">4</div>
<div class="t" style="left:76.500px;top:535.4px;font-size:8.500px;color:#c4c4c4">6</div>
<div class="t" style="left:76.500px;top:563.3px;font-size:8.500px;color:#c4c4c4">1</div>
<div class="t" style="left:76.500px;top:572.0px;font-size:8.500px;color:#c4c4c4">4</div>
<div class="t" style="left:76.500px;top:580.7px;font-size:8.500px;color:#c4c4c4">7</div>
<div class="t" style="left:76.500px;top:608.7px;font-size:8.500px;color:#c4c4c4">1</div>
<div class="t" style="left:76.500px;top:617.4px;font-size:8.500px;color:#c4c4c4">4</div>
<div class="t" style="left:76.500px;top:626.1px;font-size:8.500px;color:#c4c4c4">8</div>
<div class="t" style="left:76.500px;top:654.0px;font-size:8.500px;color:#c4c4c4">1</div>
<div class="t" style="left:76.500px;top:662.7px;font-size:8.500px;color:#c4c4c4">4</div>
<div class="t" style="left:76.500px;top:671.4px;font-size:8.500px;color:#c4c4c4">9</div>
<svg style="left:0;top:0;clip-path:inset(101px 493px 17px 90px)" width="1366" height="728"><g fill="#545456">
<path d="M285.5 95.5C286.4 96.4 288.0 97.9 291.1 101.0C294.2 104.1 299.3 109.6 303.9 114.0C308.5 118.3 313.7 122.6 318.7 126.9C323.7 131.3 328.9 135.6 333.9 139.9C338.9 144.2 344.0 148.5 348.7 152.9C353.5 157.2 358.1 161.5 362.4 165.8C366.8 170.1 371.0 174.5 374.9 178.8C378.9 183.1 382.6 187.4 386.2 191.8C389.7 196.1 393.1 200.4 396.3 204.7C399.5 209.0 402.5 213.4 405.4 217.7C408.3 222.0 411.1 226.3 413.7 230.7C416.4 235.0 419.0 239.3 421.5 243.6C424.0 247.9 426.4 252.3 428.8 256.6C431.1 260.9 433.4 265.2 435.6 269.6C437.9 273.9 440.1 278.2 442.2 282.5C444.3 286.8 446.4 291.2 448.3 295.5C450.3 299.8 452.3 304.1 454.1 308.4C456.0 312.8 457.7 317.1 459.4 321.4C461.1 325.7 462.7 330.1 464.2 334.4C465.7 338.7 467.1 343.0 468.4 347.3C469.7 351.7 470.9 356.0 472.0 360.3C473.1 364.6 474.1 369.0 475.0 373.3C476.0 377.6 476.8 381.9 477.6 386.2C478.3 390.6 479.0 394.9 479.7 399.2C480.3 403.5 480.9 407.9 481.5 412.2C482.0 416.5 482.5 420.8 483.0 425.1C483.6 429.5 484.1 433.8 484.5 438.1C485.0 442.4 485.4 446.7 485.8 451.1C486.2 455.4 486.5 459.7 486.7 464.0C486.9 468.4 486.8 474.8 486.8 477.0L495.0 477.5C495.5 477.0 497.4 475.8 498.0 474.5C498.6 473.2 498.4 472.9 498.7 470.0C499.0 467.1 499.6 461.5 500.0 457.3C500.4 453.0 500.7 448.8 500.9 444.6C501.1 440.3 501.3 436.1 501.4 431.8C501.4 427.6 501.4 423.3 501.4 419.1C501.3 414.9 501.2 410.6 500.9 406.4C500.7 402.1 500.4 397.9 500.1 393.7C499.7 389.4 499.3 385.2 498.8 380.9C498.3 376.7 497.7 372.4 497.1 368.2C496.5 364.0 495.8 359.7 495.1 355.5C494.3 351.2 493.5 347.0 492.7 342.8C491.9 338.5 491.0 334.3 490.0 330.0C489.1 325.8 488.1 321.6 487.1 317.3C486.1 313.1 485.1 308.8 484.0 304.6C482.9 300.3 481.7 296.1 480.6 291.9C479.4 287.6 478.2 283.4 476.9 279.1C475.7 274.9 474.4 270.7 473.1 266.4C471.7 262.2 470.4 257.9 469.0 253.7C467.5 249.4 466.1 245.2 464.5 241.0C463.0 236.7 461.5 232.5 459.8 228.2C458.2 224.0 456.5 219.8 454.7 215.5C453.0 211.3 451.1 207.0 449.2 202.8C447.3 198.6 445.3 194.3 443.2 190.1C441.2 185.8 439.0 181.6 436.7 177.3C434.4 173.1 432.1 168.9 429.6 164.6C427.1 160.4 424.5 156.1 421.7 151.9C419.0 147.7 416.2 143.4 413.2 139.2C410.2 134.9 407.0 130.7 403.8 126.4C400.5 122.2 397.1 118.0 393.5 113.7C389.9 109.5 385.0 104.0 382.3 101.0C379.6 98.0 377.9 96.4 377.0 95.5Z" stroke="#5b6fae" stroke-width=".8"/>
<path d="M745.0 101.0C741.7 111.0 731.9 141.0 725.4 161.0C718.9 181.0 712.3 201.2 705.7 221.0C699.1 240.8 689.8 268.4 686.0 280.0C682.2 291.6 683.9 286.1 682.7 290.5C681.5 294.9 679.8 301.6 678.6 306.4C677.4 311.2 676.1 315.1 675.5 319.5C674.9 323.9 674.6 329.2 674.8 332.7C675.0 336.2 675.6 338.4 676.8 340.6C678.0 342.8 679.5 344.6 682.0 345.9C684.5 347.2 688.5 347.7 692.0 348.6C695.5 349.5 699.8 350.4 703.1 351.2C706.4 352.0 709.5 352.8 712.0 353.6C714.5 354.4 716.9 355.4 717.9 355.8L717.9 355.8C718.0 356.2 718.6 357.7 718.3 358.5C718.0 359.3 716.6 360.2 716.3 360.6L556.0 360.6C555.5 360.4 553.6 359.8 553.0 359.2C552.4 358.6 552.1 358.0 552.6 357.1C553.1 356.2 554.2 355.0 556.2 354.1C558.2 353.2 560.1 352.8 564.8 351.8C569.5 350.8 578.8 349.0 584.5 347.9C590.2 346.8 595.3 346.4 599.0 345.2C602.7 344.0 604.5 342.5 606.9 340.6C609.3 338.7 611.1 336.9 613.5 334.0C615.9 331.1 618.8 327.4 621.4 323.5C624.0 319.6 626.9 314.9 629.3 310.3C631.7 305.7 633.8 300.9 635.9 295.8C638.0 290.8 638.8 288.1 641.9 280.0C645.0 271.9 650.7 256.8 654.3 247.0C657.9 237.2 660.3 230.3 663.6 221.0C666.9 211.7 669.8 203.5 674.2 191.2C678.6 178.9 684.7 162.0 690.0 147.0C695.3 132.0 703.5 108.7 706.2 101.0Z"/>
<path d="M90.0 333.6C91.7 334.8 96.7 338.9 100.0 341.0C103.3 343.1 106.6 344.6 110.0 346.0C113.4 347.4 116.1 348.7 120.3 349.4C124.5 350.1 130.7 349.6 135.0 350.0C139.3 350.4 143.4 350.6 146.0 351.5C148.6 352.4 150.2 353.9 150.4 355.2C150.6 356.4 149.1 358.3 147.0 359.0C144.9 359.7 147.5 359.4 138.0 359.5C128.5 359.6 98.0 359.5 90.0 359.5Z"/>
</g>
<rect x="486.500" y="479.500" width="7" height="7" fill="#fff" stroke="#4a5fb0" stroke-width="1"/>
<path d="M489 484 L489 500 L492.600 496.600 L495.300 502.300 L498 501 L495.300 495.500 L500 495.500Z" fill="#111" stroke="#fff" stroke-width="1"/>
<rect x="500.800" y="497.800" width="5" height="5" fill="#fff" stroke="#111" stroke-width="1.6"/>
</svg>
<div class="t" style="left:494px;top:470px;font-size:8px;color:#55d24a">bağ</div>
<div class="a" style="left:510px;top:483px;width:70.500px;height:30.500px;background:#cdcdcd;border-radius:2px"></div>
<div class="t" style="transform:scaleX(0.952);left:515.3px;top:487.2px;font-size:10px;color:#111;">X: 161,84 mm</div>
<div class="t" style="transform:scaleX(0.955);left:515.3px;top:500.4px;font-size:10px;color:#111;">Y: 144,5 mm</div>
<!-- SCROLLBARS + STATUS -->
<div class="a" style="left:874px;top:85px;width:16px;height:626px;background:#383838"></div>
<div class="a" style="left:873px;top:85px;width:1px;height:626px;background:#2a2a2a"></div>
<div class="a" style="left:876px;top:90px;border:6px solid transparent;border-bottom:7px solid #e4e4e4;border-top:0"></div>
<div class="a" style="left:874px;top:394px;width:15px;height:15px;background:#939393"></div>
<div class="a" style="left:876px;top:700px;border:6px solid transparent;border-top:7px solid #e4e4e4;border-bottom:0"></div>
<div class="a" style="left:71px;top:711px;width:819px;height:17px;background:#454545"></div>
<div class="a" style="left:71px;top:711px;width:819px;height:1px;background:#2a2a2a"></div>
<!-- gpu icon + share -->
<div class="a" style="left:81px;top:715px;width:20px;height:10px;background:#555;border-radius:2px"></div><svg style="left:83px;top:716px" width="16" height="8" viewBox="0 0 16 8"><circle cx="4" cy="4" r="2.600" fill="none" stroke="#6c6c6c" stroke-width="1.300"/><path d="M8.500 2.500H14M8.500 5.500H14M12 0.500L14.500 2.500M11 7.500L8.500 5.500" fill="none" stroke="#6c6c6c" stroke-width="1.100"/></svg>
<svg style="left:110px;top:713px" width="14" height="13" viewBox="0 0 14 13"><path d="M1 3.500 H5 M1 3.500 V11.500 H10.500 V8" fill="none" stroke="#d8d8d8" stroke-width="1.6"/><path d="M8.500 1 L13 4.500 L8.500 8 V6 C6 6 5 7 4 9 C4 5.500 6 3.500 8.500 3.300Z" fill="#e8e8e8"/></svg>
<div class="fld" style="left:136px;top:713px;width:52px;height:16px"></div>
<div class="t" style="transform:scaleX(0.876);left:139.0px;top:716.0px;font-size:11px;color:#111;">1600%</div>
<div class="dd" style="left:187px;top:713px;width:16px;height:16px"></div>
<svg style="left:210px;top:715px" width="130" height="10" viewBox="0 0 130 10"><g fill="#5c5c5c"><path d="M3 0H5V10H3ZM11 0V10L5 5Z"/><path d="M28 0V10L21 5Z"/><path d="M104 0V10L111 5Z"/><path d="M121 0V10L127 5ZM127 0H129V10H127Z"/></g></svg>
<div class="fld" style="left:247px;top:713px;width:41px;height:16px"></div>
<div class="t" style="left:250px;top:716.500px;font-size:11px;color:#111">1</div>
<div class="dd" style="left:287px;top:713px;width:16px;height:16px"></div>
<div class="a" style="left:346px;top:712px;width:1px;height:16px;background:#2e2e2e"></div>
<div class="t b" style="transform:scaleX(0.919);left:408.0px;top:716.6px;font-size:10px;color:#e4e4e4;">Doğrudan Seçim</div>
<div class="a" style="left:548px;top:712px;width:13px;height:16px;background:#4a4a4a"></div>
<div class="a" style="left:552px;top:715px;border:5px solid transparent;border-left:6px solid #dcdcdc;border-right:0"></div>
<div class="a" style="left:563px;top:712px;width:311px;height:16px;background:#2f2f2f"></div>
<div class="a" style="left:568px;top:714px;border:6px solid transparent;border-right:7px solid #e4e4e4;border-left:0"></div>
<div class="a" style="left:711px;top:712px;width:15px;height:16px;background:#939393"></div>
<div class="a" style="left:860px;top:714px;border:6px solid transparent;border-left:7px solid #e4e4e4;border-right:0"></div>
<div class="a" style="left:874px;top:712px;width:15px;height:16px;background:#4a4a4a"></div>
<div class="a" style="left:889px;top:65px;width:3px;height:663px;background:#2a2a2a"></div>
<!-- RIGHT COLUMN 1 -->
<div class="a" style="left:892px;top:65px;width:231px;height:663px;background:#4a4a4a;"></div>
<div class="a" style="left:892px;top:65px;width:231px;height:12px;background:#303030;"></div>
<svg style="left:1110px;top:67px" width="10" height="8" viewBox="0 0 10 8"><path d="M0.500 0.500V7.500L4 4ZM5 0.500V7.500L8.500 4Z" fill="#d0d0d0"/></svg>
<div class="a" style="left:1122px;top:65px;width:4px;height:663px;background:#2a2a2a;"></div>
<div class="a" style="left:892px;top:74px;width:231px;height:3px;background:#2b2b2b;"></div>
<div class="a" style="left:892px;top:77px;width:231px;height:17px;background:#353535;"></div>
<div class="a" style="left:892px;top:77px;width:50px;height:17px;background:#4a4a4a;border-right:1px solid #2e2e2e"></div>
<svg style="left:896px;top:81px" width="6" height="9" viewBox="0 0 6 9"><path d="M0.600 3.400L3 1L5.400 3.400M0.600 5.600L3 8L5.400 5.600" fill="none" stroke="#e6e6e6" stroke-width="1.200"/></svg>
<div class="t b" style="transform:scaleX(1.003);left:905.2px;top:80.7px;font-size:10px;color:#ececec;">Hizala</div>
<div class="a" style="left:1104px;top:83px;border:2.500px solid transparent;border-top:3px solid #d0d0d0;border-bottom:0"></div>
<div class="a" style="left:1110px;top:82px;width:9px;height:8px;background:repeating-linear-gradient(#d4d4d4 0 1px,transparent 1px 2px)"></div>
<div class="t b" style="transform:scaleX(0.915);left:897.0px;top:101.5px;font-size:10px;color:#e4e4e4;">Bağlantı Noktalarını Hizala:</div>
<div class="a" style="left:896px;top:148px;width:220px;height:1px;background:#3e3e3e;"></div>
<div class="a" style="left:896px;top:149px;width:220px;height:1px;background:#525252;"></div>
<div class="t b" style="transform:scaleX(0.920);left:897.0px;top:156.3px;font-size:10px;color:#e4e4e4;">Bağlantı Noktalarını Dağıt:</div>
<svg style="left:900px;top:119px" width="20" height="20" viewBox="0 0 20 20"><path d="M3.500 3V17" stroke="#e0e0e0" stroke-width="1.200" fill="none"/><rect x="5" y="4" width="7" height="4" fill="#c4c4c4"/><rect x="5.500" y="10.500" width="10" height="4" stroke="#e0e0e0" stroke-width="1.200" fill="none"/></svg>
<svg style="left:935px;top:119px" width="20" height="20" viewBox="0 0 20 20"><path d="M10.500 2V18" stroke="#e0e0e0" stroke-width="1.200" fill="none"/><rect x="7" y="4" width="7" height="4" fill="#c4c4c4"/><rect x="5.500" y="10.500" width="10" height="4" stroke="#e0e0e0" stroke-width="1.200" fill="#4a4a4a"/></svg>
<svg style="left:972px;top:119px" width="20" height="20" viewBox="0 0 20 20"><path d="M16.500 3V17" stroke="#e0e0e0" stroke-width="1.200" fill="none"/><rect x="8" y="4" width="7" height="4" fill="#c4c4c4"/><rect x="4.500" y="10.500" width="10" height="4" stroke="#e0e0e0" stroke-width="1.200" fill="none"/></svg>
<svg style="left:1022px;top:119px" width="20" height="20" viewBox="0 0 20 20"><path d="M3 3.500H17" stroke="#e0e0e0" stroke-width="1.200" fill="none"/><rect x="4.500" y="5.500" width="4" height="10" stroke="#e0e0e0" stroke-width="1.200" fill="none"/><rect x="11" y="5" width="5" height="7" fill="#c4c4c4"/></svg>
<svg style="left:1058px;top:119px" width="20" height="20" viewBox="0 0 20 20"><path d="M2 10.500H18" stroke="#e0e0e0" stroke-width="1.200" fill="none"/><rect x="5.500" y="5.500" width="4" height="10" stroke="#e0e0e0" stroke-width="1.200" fill="#4a4a4a"/><rect x="11.500" y="7" width="5" height="7" fill="#c4c4c4"/></svg>
<svg style="left:1094px;top:121px" width="20" height="20" viewBox="0 0 20 20"><path d="M3 16.500H17" stroke="#e0e0e0" stroke-width="1.200" fill="none"/><rect x="4.500" y="4.500" width="4" height="10" stroke="#e0e0e0" stroke-width="1.200" fill="none"/><rect x="11" y="8" width="5" height="7" fill="#c4c4c4"/></svg>
<svg style="left:900px;top:173px" width="20" height="20" viewBox="0 0 20 20"><path d="M2 4.500H18M2 11.500H18" stroke="#e0e0e0" stroke-width="1.200" fill="none"/><rect x="6.500" y="5" width="7" height="4" fill="#c4c4c4"/><rect x="5.500" y="12" width="9" height="3.500" stroke="#e0e0e0" stroke-width="1.200" fill="none"/></svg>
<svg style="left:936px;top:173px" width="20" height="20" viewBox="0 0 20 20"><path d="M2 6.500H18M2 13.500H18" stroke="#e0e0e0" stroke-width="1.200" fill="none"/><rect x="7" y="4" width="6" height="5" fill="#c4c4c4"/><rect x="5.500" y="11.500" width="9" height="4" stroke="#e0e0e0" stroke-width="1.200" fill="#4a4a4a"/></svg>
<svg style="left:972px;top:173px" width="20" height="20" viewBox="0 0 20 20"><path d="M2 9.500H18M2 16.500H18" stroke="#e0e0e0" stroke-width="1.200" fill="none"/><rect x="6.500" y="5" width="7" height="4" fill="#c4c4c4"/><rect x="5.500" y="12.500" width="9" height="4" stroke="#e0e0e0" stroke-width="1.200" fill="none"/></svg>
<svg style="left:1022px;top:173px" width="20" height="20" viewBox="0 0 20 20"><path d="M4.500 2V18M11.500 2V18" stroke="#e0e0e0" stroke-width="1.200" fill="none"/><rect x="5" y="5.500" width="4" height="9" stroke="#e0e0e0" stroke-width="1.200" fill="none"/><rect x="12" y="6.500" width="4.500" height="7" fill="#c4c4c4"/></svg>
<svg style="left:1058px;top:173px" width="20" height="20" viewBox="0 0 20 20"><path d="M6.500 2V18M13.500 2V18" stroke="#e0e0e0" stroke-width="1.200" fill="none"/><rect x="4.500" y="5.500" width="4" height="9" stroke="#e0e0e0" stroke-width="1.200" fill="#4a4a4a"/><rect x="11.500" y="6.500" width="4.500" height="7" fill="#c4c4c4"/></svg>
<svg style="left:1094px;top:173px" width="20" height="20" viewBox="0 0 20 20"><path d="M9.500 2V18M16.500 2V18" stroke="#e0e0e0" stroke-width="1.200" fill="none"/><rect x="4.500" y="6.500" width="4.500" height="7" fill="#c4c4c4"/><rect x="12" y="5.500" width="4" height="9" stroke="#e0e0e0" stroke-width="1.200" fill="none"/></svg>
<div class="a" style="left:892px;top:201px;width:231px;height:3px;background:#2b2b2b;"></div>
<div class="a" style="left:892px;top:204px;width:231px;height:17px;background:#353535;"></div>
<div class="a" style="left:892px;top:204px;width:64px;height:17px;background:#4a4a4a;border-right:1px solid #2e2e2e"></div>
<div class="t b" style="transform:scaleX(0.971);left:899.0px;top:207.8px;font-size:10px;color:#ececec;">Yol Bulucu</div>
<div class="a" style="left:1104px;top:210px;border:2.500px solid transparent;border-top:3px solid #d0d0d0;border-bottom:0"></div>
<div class="a" style="left:1110px;top:209px;width:9px;height:8px;background:repeating-linear-gradient(#d4d4d4 0 1px,transparent 1px 2px)"></div>
<div class="t b" style="transform:scaleX(0.907);left:897.0px;top:228.8px;font-size:10px;color:#e4e4e4;">Şekil Modları:</div>
<svg style="left:900px;top:246px" width="20" height="20" viewBox="0 0 20 20"><rect x="3.500" y="3.500" width="9" height="9" fill="#a8a8a8" stroke="#d4d4d4"/><rect x="7.500" y="7.500" width="9" height="9" fill="#a8a8a8" stroke="#d4d4d4"/></svg>
<svg style="left:936px;top:246px" width="20" height="20" viewBox="0 0 20 20"><path d="M4 4H13V7H7V13H4Z" fill="#c4c4c4"/><rect x="8.500" y="8.500" width="8" height="8" fill="#555" stroke="#646464"/></svg>
<svg style="left:973px;top:246px" width="20" height="20" viewBox="0 0 20 20"><rect x="4.500" y="4.500" width="8" height="8" stroke="#e0e0e0" stroke-width="1.200" fill="none"/><rect x="8.500" y="8.500" width="8" height="8" stroke="#e0e0e0" stroke-width="1.200" fill="none"/><rect x="8.500" y="8.500" width="4" height="4" fill="#b9b9b9"/></svg>
<svg style="left:1011px;top:246px" width="20" height="20" viewBox="0 0 20 20"><rect x="4.500" y="4.500" width="8" height="8" fill="#9a9a9a" stroke="#d0d0d0"/><rect x="8.500" y="8.500" width="8" height="8" fill="#9a9a9a" stroke="#d0d0d0"/><rect x="8.500" y="8.500" width="4" height="4" fill="#4a4a4a" stroke="#d0d0d0"/></svg>
<div class="a" style="left:1047px;top:247.5px;width:69px;height:16.5px;background:#505050;border:1px solid #383838;box-sizing:border-box;box-shadow:inset 0 1px 0 #5c5c5c"></div>
<div class="t b" style="transform:scaleX(0.902);left:1064.0px;top:251.5px;font-size:10px;color:#7c7c7c;">Genişlet</div>
<div class="t b" style="transform:scaleX(0.895);left:897.0px;top:275.5px;font-size:10px;color:#e4e4e4;">Yol bulucular:</div>
<svg style="left:903px;top:293px" width="20" height="20" viewBox="0 0 20 20"><rect x="3.500" y="3.500" width="6" height="6" fill="#4a4a4a" stroke="#e0e0e0"/><rect x="6.500" y="6.500" width="6" height="6" fill="#4a4a4a" stroke="#e0e0e0"/><rect x="10.500" y="10.500" width="6" height="6" fill="#4a4a4a" stroke="#e0e0e0"/></svg>
<svg style="left:940px;top:293px" width="20" height="20" viewBox="0 0 20 20"><path d="M3 3H9V7H12V10H6V13H3Z" fill="#c8c8c8"/><path d="M6 3V13M3 7H9" stroke="#4a4a4a" stroke-width="1"/><rect x="8.500" y="9.500" width="8" height="8" fill="#b4b4b4" stroke="#4a4a4a"/></svg>
<svg style="left:977px;top:293px" width="20" height="20" viewBox="0 0 20 20"><rect x="3" y="3" width="10" height="10" fill="#cacaca"/><rect x="9" y="9" width="8" height="8" fill="#a8a8a8" stroke="#4a4a4a"/></svg>
<svg style="left:1014px;top:293px" width="20" height="20" viewBox="0 0 20 20"><rect x="3" y="3" width="10" height="10" fill="#5c5c5c"/><rect x="8" y="8" width="9" height="9" fill="#5c5c5c"/><rect x="7" y="7" width="7" height="7" fill="#c0c0c0"/></svg>
<svg style="left:1052px;top:293px" width="20" height="20" viewBox="0 0 20 20"><rect x="3.500" y="3.500" width="8" height="8" stroke="#e0e0e0" stroke-width="1.200" fill="none"/><rect x="8.500" y="8.500" width="8" height="8" stroke="#e0e0e0" stroke-width="1.200" fill="#4a4a4a"/><rect x="6.500" y="6.500" width="4" height="4" stroke="#e0e0e0" stroke-width="1.200" fill="#4a4a4a"/></svg>
<svg style="left:1089px;top:293px" width="20" height="20" viewBox="0 0 20 20"><rect x="3.500" y="3.500" width="9" height="9" fill="#585858" stroke="#6a6a6a"/><path d="M16.500 7V16.500H7V13.500H13.500V7Z" fill="#4a4a4a" stroke="#d8d8d8"/></svg>
<div class="a" style="left:892px;top:322px;width:231px;height:3px;background:#2b2b2b;"></div>
<div class="a" style="left:892px;top:325px;width:231px;height:17px;background:#353535;"></div>
<div class="a" style="left:892px;top:325px;width:64px;height:17px;background:#4a4a4a;border-right:1px solid #2e2e2e"></div>
<svg style="left:896px;top:329px" width="6" height="9" viewBox="0 0 6 9"><path d="M0.600 3.400L3 1L5.400 3.400M0.600 5.600L3 8L5.400 5.600" fill="none" stroke="#e6e6e6" stroke-width="1.200"/></svg>
<div class="t b" style="transform:scaleX(0.967);left:905.2px;top:328.8px;font-size:10px;color:#ececec;">Dönüştür</div>
<div class="a" style="left:1104px;top:331px;border:2.500px solid transparent;border-top:3px solid #d0d0d0;border-bottom:0"></div>
<div class="a" style="left:1110px;top:330px;width:9px;height:8px;background:repeating-linear-gradient(#d4d4d4 0 1px,transparent 1px 2px)"></div>
<svg style="left:897px;top:361px" width="20" height="20" viewBox="0 0 20 20"><path d="M3.500 3.500H17.500V17.500H3.500ZM3.500 10.500H17.500M10.500 3.500V17.500" fill="none" stroke="#cfcfcf" stroke-width="1"/><rect x="1.5" y="1.5" width="4" height="4" fill="#4a4a4a" stroke="#e0e0e0" stroke-width="1"/><rect x="1.5" y="8.5" width="4" height="4" fill="#4a4a4a" stroke="#e0e0e0" stroke-width="1"/><rect x="1.5" y="15.5" width="4" height="4" fill="#4a4a4a" stroke="#e0e0e0" stroke-width="1"/><rect x="8.5" y="1.5" width="4" height="4" fill="#4a4a4a" stroke="#e0e0e0" stroke-width="1"/><rect x="8.5" y="8.5" width="4" height="4" fill="#e0e0e0" stroke="#e0e0e0" stroke-width="1"/><rect x="8.5" y="15.5" width="4" height="4" fill="#4a4a4a" stroke="#e0e0e0" stroke-width="1"/><rect x="15.5" y="1.5" width="4" height="4" fill="#4a4a4a" stroke="#e0e0e0" stroke-width="1"/><rect x="15.5" y="8.5" width="4" height="4" fill="#4a4a4a" stroke="#e0e0e0" stroke-width="1"/><rect x="15.5" y="15.5" width="4" height="4" fill="#4a4a4a" stroke="#e0e0e0" stroke-width="1"/></svg>
<div class="t b" style="transform:scaleX(0.960);left:930.0px;top:353.0px;font-size:10px;color:#7e7e7e;">X:</div>
<div class="a" style="left:944px;top:348.5px;width:57px;height:18px;background:#7c7c7c;border:1px solid #3a3a3a;box-sizing:border-box"></div>
<div class="t" style="transform:scaleX(0.952);left:947.5px;top:351.9px;font-size:10.5px;color:#505050;">0 mm</div>
<div class="t b" style="transform:scaleX(0.990);left:1007.0px;top:353.0px;font-size:10px;color:#7e7e7e;">G:</div>
<div class="a" style="left:1023px;top:348.5px;width:56px;height:18px;background:#7c7c7c;border:1px solid #3a3a3a;box-sizing:border-box"></div>
<div class="t" style="transform:scaleX(0.952);left:1026.5px;top:351.9px;font-size:10.5px;color:#505050;">0 mm</div>
<div class="t b" style="transform:scaleX(1.036);left:930.0px;top:379.0px;font-size:10px;color:#7e7e7e;">Y:</div>
<div class="a" style="left:944px;top:374.5px;width:57px;height:18px;background:#7c7c7c;border:1px solid #3a3a3a;box-sizing:border-box"></div>
<div class="t" style="transform:scaleX(0.952);left:947.5px;top:377.9px;font-size:10.5px;color:#505050;">0 mm</div>
<div class="t b" style="transform:scaleX(1.041);left:1007.0px;top:379.0px;font-size:10px;color:#7e7e7e;">H:</div>
<div class="a" style="left:1023px;top:374.5px;width:56px;height:18px;background:#7c7c7c;border:1px solid #3a3a3a;box-sizing:border-box"></div>
<div class="t" style="transform:scaleX(0.952);left:1026.5px;top:377.9px;font-size:10.5px;color:#505050;">0 mm</div>
<svg style="left:1088px;top:361px" width="18" height="18" viewBox="0 0 18 18"><rect x="6.500" y="3.500" width="5" height="11" rx="2.500" fill="none" stroke="#d8d8d8" stroke-width="1.400"/><path d="M9 7V11" stroke="#d8d8d8" stroke-width="1.200"/><path d="M1 5L4 6.500M1 13L4 11.500M17 5L14 6.500M17 13L14 11.500M0.500 9H3.500M14.500 9H17.500" stroke="#d8d8d8" stroke-width="1.100"/></svg>
<svg style="left:926px;top:403px" width="14" height="12" viewBox="0 0 14 12"><path d="M1 10.500H11L8 3" fill="none" stroke="#7a7a7a" stroke-width="1.100"/></svg>
<div class="a" style="left:944px;top:400px;width:39px;height:18px;background:#7c7c7c;border:1px solid #3a3a3a;box-sizing:border-box"></div>
<div class="t" style="transform:scaleX(0.796);left:947.5px;top:403.4px;font-size:10.5px;color:#505050;">0°</div>
<div class="a" style="left:982px;top:400px;width:16px;height:18px;background:#5c5c5c;border:1px solid #3a3a3a;box-sizing:border-box"></div>
<div class="a" style="left:986px;top:407px;border:4px solid transparent;border-top:5px solid #8c8c8c;border-bottom:0"></div>
<svg style="left:1005px;top:403px" width="14" height="12" viewBox="0 0 14 12"><path d="M1.500 10.500L5.500 2.500H12.500L8.500 10.500Z" fill="none" stroke="#7a7a7a" stroke-width="1.100"/></svg>
<div class="a" style="left:1024px;top:400px;width:41px;height:18px;background:#7c7c7c;border:1px solid #3a3a3a;box-sizing:border-box"></div>
<div class="t" style="transform:scaleX(0.796);left:1027.5px;top:403.4px;font-size:10.5px;color:#505050;">0°</div>
<div class="a" style="left:1064px;top:400px;width:16px;height:18px;background:#5c5c5c;border:1px solid #3a3a3a;box-sizing:border-box"></div>
<div class="a" style="left:1068px;top:407px;border:4px solid transparent;border-top:5px solid #8c8c8c;border-bottom:0"></div>
<div class="a" style="left:896px;top:425px;width:220px;height:1px;background:#424242;"></div>
<div class="t b" style="transform:scaleX(0.904);left:969.5px;top:494.0px;font-size:10px;color:#8e8e8e;">Şekil Özelliği Yok</div>
<div class="a" style="left:896px;top:569px;width:220px;height:1px;background:#424242;"></div>
<div class="a" style="left:898px;top:577.5px;width:11.5px;height:11.5px;background:#4e4e4e;border:1px solid #3a3a3a;box-sizing:border-box"></div>
<div class="t b" style="transform:scaleX(0.909);left:913.7px;top:578.7px;font-size:10px;color:#7e7e7e;">Dikdörtgen Köşelerini Ölçekle</div>
<div class="a" style="left:898px;top:597.5px;width:11.5px;height:11.5px;background:#4e4e4e;border:1px solid #3a3a3a;box-sizing:border-box"></div>
<div class="t b" style="transform:scaleX(0.916);left:913.7px;top:598.7px;font-size:10px;color:#7e7e7e;">Konturları ve Efektleri Ölçekle</div>
<div class="a" style="left:898px;top:617.5px;width:11.5px;height:11.5px;background:#4e4e4e;border:1px solid #3a3a3a;box-sizing:border-box"></div>
<div class="t b" style="transform:scaleX(0.919);left:913.7px;top:618.7px;font-size:10px;color:#7e7e7e;">Piksel Izgarasına Hizala</div>
<div class="a" style="left:892px;top:636px;width:231px;height:1px;background:#2e2e2e;"></div>
<div class="a" style="left:892px;top:725px;width:231px;height:3px;background:#2e2e2e;"></div>
<!-- RIGHT COLUMN 2 -->
<div class="a" style="left:1126px;top:65px;width:240px;height:663px;background:#4a4a4a"></div>
<div class="a" style="left:1126px;top:65px;width:240px;height:12px;background:#303030"></div>
<svg style="left:1353px;top:67px" width="10" height="8" viewBox="0 0 10 8"><path d="M0.500 0.500V7.500L4 4ZM5 0.500V7.500L8.500 4Z" fill="#d0d0d0"/></svg>
<div class="a" style="left:1126px;top:77px;width:240px;height:0px;background:#2b2b2b;"></div>
<div class="a" style="left:1126px;top:77px;width:240px;height:17px;background:#353535;"></div>
<div class="a" style="left:1126px;top:77px;width:43px;height:17px;background:#4a4a4a;"></div>
<svg style="left:1130px;top:81px" width="6" height="9" viewBox="0 0 6 9"><path d="M0.600 3.400L3 1L5.400 3.400M0.600 5.600L3 8L5.400 5.600" fill="none" stroke="#e6e6e6" stroke-width="1.200"/></svg>
<div class="t b" style="transform:scaleX(0.941);left:1138.7px;top:80.7px;font-size:10px;color:#ececec;">Renk</div>
<div class="a" style="left:1169px;top:77px;width:1px;height:17px;background:#2c2c2c;"></div>
<div class="a" style="left:1170px;top:77px;width:80px;height:17px;background:#3e3e3e;"></div>
<div class="t b" style="transform:scaleX(0.976);left:1176.3px;top:80.7px;font-size:10px;color:#8a8a8a;">Renk Kılavuzu</div>
<div class="a" style="left:1250px;top:77px;width:1px;height:17px;background:#2c2c2c;"></div>
<div class="a" style="left:1347px;top:83px;border:2.500px solid transparent;border-top:3px solid #d0d0d0;border-bottom:0"></div>
<div class="a" style="left:1353px;top:82px;width:9px;height:8px;background:repeating-linear-gradient(#d4d4d4 0 1px,transparent 1px 2px)"></div>
<div class="a" style="left:1131px;top:104px;width:13px;height:13px;background:#fff"></div>
<svg style="left:1131px;top:104px" width="13" height="13" viewBox="0 0 13 13"><path d="M0.500 12.500L12.500 0.500" stroke="#e0242c" stroke-width="1.800"/></svg>
<div class="a" style="left:1144px;top:104px;width:13px;height:13px;background:#000"></div>
<div class="a" style="left:1157px;top:104px;width:13px;height:13px;background:#fff"></div>
<div class="a" style="left:1131.500px;top:127.500px;width:216px;height:30.500px;background:linear-gradient(to bottom,rgba(255,255,255,.97) 0%,rgba(255,255,255,.55) 18%,rgba(255,255,255,0) 42%,rgba(0,0,0,0) 62%,rgba(0,0,0,.55) 85%,rgba(0,0,0,.95) 100%),linear-gradient(90deg,#ee1c25 0%,#f7941d 8%,#f5ea14 16%,#a6ce39 24%,#3aaa35 33%,#1f9e4a 42%,#1bb5ea 52%,#1f6fc0 59%,#26358c 68%,#6a2d91 76%,#e2127f 87%,#ed1c24 100%);border-top:1px solid #2e2e2e;box-sizing:border-box"></div>
<svg style="left:1356px;top:157px" width="8" height="8" viewBox="0 0 8 8"><g fill="#2e2e2e"><rect x="6" y="0" width="1" height="1"/><rect x="4" y="2" width="1" height="1"/><rect x="6" y="2" width="1" height="1"/><rect x="2" y="4" width="1" height="1"/><rect x="4" y="4" width="1" height="1"/><rect x="6" y="4" width="1" height="1"/><rect x="0" y="6" width="1" height="1"/><rect x="2" y="6" width="1" height="1"/><rect x="4" y="6" width="1" height="1"/><rect x="6" y="6" width="1" height="1"/></g></svg>
<div class="a" style="left:1126px;top:165px;width:240px;height:3px;background:#2b2b2b;"></div>
<div class="a" style="left:1126px;top:168px;width:240px;height:17px;background:#353535;"></div>
<div class="a" style="left:1126px;top:168px;width:83px;height:17px;background:#4a4a4a;"></div>
<div class="t b" style="transform:scaleX(0.984);left:1132.5px;top:171.7px;font-size:10px;color:#ececec;">Renk Örnekleri</div>
<div class="a" style="left:1209px;top:168px;width:1px;height:17px;background:#2c2c2c;"></div>
<div class="a" style="left:1347px;top:174px;border:2.500px solid transparent;border-top:3px solid #d0d0d0;border-bottom:0"></div>
<div class="a" style="left:1353px;top:173px;width:9px;height:8px;background:repeating-linear-gradient(#d4d4d4 0 1px,transparent 1px 2px)"></div>
<div class="a" style="left:1131px;top:191px;width:18px;height:18px;background:#555;border:1px solid #e4e4e4;box-sizing:border-box"></div>
<div class="a" style="left:1141px;top:201px;width:19px;height:19px;background:#fff"></div>
<div class="a" style="left:1146px;top:206px;width:9px;height:9px;background:#4a4a4a;border:1px solid #222;box-sizing:border-box"></div>
<svg style="left:1141px;top:201px" width="19" height="19" viewBox="0 0 19 19"><path d="M0.500 18.500L18.500 0.500" stroke="#e0242c" stroke-width="1.800"/></svg>
<div class="a" style="left:1308px;top:192px;width:51px;height:22px;background:#3a3a3a;border:1px solid #2e2e2e;box-sizing:border-box"></div>
<div class="a" style="left:1309px;top:193px;width:24px;height:20px;background:#5c5c5c"></div>
<div class="a" style="left:1333px;top:193px;width:1px;height:20px;background:#2e2e2e"></div>
<div class="a" style="left:1315px;top:197px;width:13px;height:13px;background:repeating-linear-gradient(#e0e0e0 0 2px,transparent 2px 5px)"></div>
<div class="a" style="left:1340px;top:196px;width:14px;height:14px;background:repeating-linear-gradient(90deg,#e0e0e0 0 4px,transparent 4px 5px);-webkit-mask:repeating-linear-gradient(#000 0 4px,transparent 4px 5px);mask:repeating-linear-gradient(#000 0 4px,transparent 4px 5px)"></div>
<div class="a" style="left:1130px;top:225px;width:231px;height:53px;background:#424242;border:1px solid #333;box-sizing:border-box"></div>
<div class="a" style="left:1131.0px;top:227.0px;width:13.5px;height:13px;background:#fff;box-shadow:inset 0 0 0 1px #222"></div>
<svg style="left:1131.0px;top:227.0px" width="13" height="13" viewBox="0 0 13 13"><path d="M1 12L12 1" stroke="#e0242c" stroke-width="1.600"/></svg>
<div class="a" style="left:1145.0px;top:227.0px;width:13.5px;height:13px;background:#fff"></div>
<svg style="left:1145.0px;top:227.0px" width="13" height="13" viewBox="0 0 13 13"><circle cx="6.500" cy="6.500" r="3.500" fill="none" stroke="#111" stroke-width="1"/><circle cx="6.500" cy="6.500" r="1.300" fill="#111"/><path d="M6.500 0V13M0 6.500H13" stroke="#111" stroke-width="1"/></svg>
<div class="a" style="left:1159.1px;top:227.0px;width:13.5px;height:13px;background:#ffffff"></div>
<div class="a" style="left:1173.2px;top:227.0px;width:13.5px;height:13px;background:#000000"></div>
<div class="a" style="left:1187.2px;top:227.0px;width:13.5px;height:13px;background:#ed1c24"></div>
<div class="a" style="left:1201.2px;top:227.0px;width:13.5px;height:13px;background:#fff200"></div>
<div class="a" style="left:1215.3px;top:227.0px;width:13.5px;height:13px;background:#00a651"></div>
<div class="a" style="left:1229.3px;top:227.0px;width:13.5px;height:13px;background:#00aeef"></div>
<div class="a" style="left:1243.4px;top:227.0px;width:13.5px;height:13px;background:#2e3192"></div>
<div class="a" style="left:1257.5px;top:227.0px;width:13.5px;height:13px;background:#ec008c"></div>
<div class="a" style="left:1271.5px;top:227.0px;width:13.5px;height:13px;background:#d2232a"></div>
<div class="a" style="left:1285.5px;top:227.0px;width:13.5px;height:13px;background:#ef4136"></div>
<div class="a" style="left:1299.6px;top:227.0px;width:13.5px;height:13px;background:#f15a29"></div>
<div class="a" style="left:1313.7px;top:227.0px;width:13.5px;height:13px;background:#f7941e"></div>
<div class="a" style="left:1327.7px;top:227.0px;width:13.5px;height:13px;background:#fbb040"></div>
<div class="a" style="left:1131.0px;top:241.2px;width:13.5px;height:13px;background:#f9ed32"></div>
<div class="a" style="left:1145.0px;top:241.2px;width:13.5px;height:13px;background:#d7df23"></div>
<div class="a" style="left:1159.1px;top:241.2px;width:13.5px;height:13px;background:#8dc63f"></div>
<div class="a" style="left:1173.2px;top:241.2px;width:13.5px;height:13px;background:#39b54a"></div>
<div class="a" style="left:1187.2px;top:241.2px;width:13.5px;height:13px;background:#009444"></div>
<div class="a" style="left:1201.2px;top:241.2px;width:13.5px;height:13px;background:#006838"></div>
<div class="a" style="left:1215.3px;top:241.2px;width:13.5px;height:13px;background:#2bb673"></div>
<div class="a" style="left:1229.3px;top:241.2px;width:13.5px;height:13px;background:#00a79d"></div>
<div class="a" style="left:1243.4px;top:241.2px;width:13.5px;height:13px;background:#27aae1"></div>
<div class="a" style="left:1257.5px;top:241.2px;width:13.5px;height:13px;background:#1c75bc"></div>
<div class="a" style="left:1271.5px;top:241.2px;width:13.5px;height:13px;background:#2b3990"></div>
<div class="a" style="left:1285.5px;top:241.2px;width:13.5px;height:13px;background:#262262"></div>
<div class="a" style="left:1299.6px;top:241.2px;width:13.5px;height:13px;background:#662d91"></div>
<div class="a" style="left:1313.7px;top:241.2px;width:13.5px;height:13px;background:#92278f"></div>
<div class="a" style="left:1327.7px;top:241.2px;width:13.5px;height:13px;background:#9e1f63"></div>
<div class="a" style="left:1131.0px;top:255.4px;width:13.5px;height:13px;background:#da1c5c"></div>
<div class="a" style="left:1145.0px;top:255.4px;width:13.5px;height:13px;background:#ee2a7b"></div>
<div class="a" style="left:1159.1px;top:255.4px;width:13.5px;height:13px;background:#c7b299"></div>
<div class="a" style="left:1173.2px;top:255.4px;width:13.5px;height:13px;background:#998675"></div>
<div class="a" style="left:1187.2px;top:255.4px;width:13.5px;height:13px;background:#736357"></div>
<div class="a" style="left:1201.2px;top:255.4px;width:13.5px;height:13px;background:#534741"></div>
<div class="a" style="left:1215.3px;top:255.4px;width:13.5px;height:13px;background:#c69c6d"></div>
<div class="a" style="left:1229.3px;top:255.4px;width:13.5px;height:13px;background:#a67c52"></div>
<div class="a" style="left:1243.4px;top:255.4px;width:13.5px;height:13px;background:#8c6239"></div>
<div class="a" style="left:1257.5px;top:255.4px;width:13.5px;height:13px;background:#754c24"></div>
<div class="a" style="left:1271.5px;top:255.4px;width:13.5px;height:13px;background:#603913"></div>
<div class="a" style="left:1285.5px;top:255.4px;width:13.5px;height:13px;background:#42210b"></div>
<div class="a" style="left:1299.6px;top:255.4px;width:13.5px;height:13px;background:linear-gradient(90deg,#fff,#000)"></div>
<div class="a" style="left:1313.7px;top:255.4px;width:13.5px;height:13px;background:linear-gradient(90deg,#fff200,#f7941e,#ed1c24)"></div>
<div class="a" style="left:1327.7px;top:255.4px;width:13.5px;height:13px;background:#6fb7e8"></div>
<div class="a" style="left:1131.0px;top:269.6px;width:13.5px;height:8px;background:radial-gradient(circle at 50% 100%,#fff 55%,#222 60%)"></div>
<div class="a" style="left:1145.0px;top:269.6px;width:13.5px;height:8px;background:#7db442"></div>
<div class="a" style="left:1159.1px;top:269.6px;width:13.5px;height:8px;background:#b98a5a"></div>
<div class="a" style="left:1173.2px;top:269.6px;width:13.5px;height:8px;background:linear-gradient(90deg,#1c75bc,#9fd3f2)"></div>
<div class="a" style="left:1187.2px;top:269.6px;width:13.5px;height:8px;background:linear-gradient(90deg,#2b3990,#6a4a9c)"></div>
<div class="a" style="left:1201.2px;top:269.6px;width:13.5px;height:8px;background:linear-gradient(90deg,#92278f,#ef4136)"></div>
<div class="a" style="left:1215.3px;top:269.6px;width:13.5px;height:8px;background:linear-gradient(90deg,#39b54a,#d7df23)"></div>
<div class="a" style="left:1229.3px;top:269.6px;width:13.5px;height:8px;background:linear-gradient(90deg,#c46a1a,#f7941e)"></div>
<div class="a" style="left:1243.4px;top:269.6px;width:13.5px;height:8px;background:linear-gradient(90deg,#1d7a6a,#8fd0c0)"></div>
<div class="a" style="left:1347px;top:226px;width:13px;height:51px;background:#3a3a3a"></div>
<div class="a" style="left:1349px;top:231px;border:4.500px solid transparent;border-bottom:6px solid #e4e4e4;border-top:0"></div>
<div class="a" style="left:1348px;top:243px;width:11px;height:12px;background:#9a9a9a"></div>
<div class="a" style="left:1349px;top:267px;border:4.500px solid transparent;border-top:6px solid #e4e4e4;border-bottom:0"></div>
<svg style="left:1131px;top:281px" width="18" height="14" viewBox="0 0 18 14"><path d="M2.500 2V12M5.500 2V12" stroke="#d6d6d6" stroke-width="1.600"/><path d="M8 2.500L11.500 12" stroke="#d6d6d6" stroke-width="1.800"/><path d="M13 9H18L15.500 12Z" fill="#d6d6d6"/></svg>
<svg style="left:1159px;top:281px" width="18" height="14" viewBox="0 0 18 14"><circle cx="11" cy="3.500" r="2" fill="none" stroke="#d6d6d6" stroke-width="1.300"/><circle cx="6" cy="7.500" r="2" fill="#d6d6d6"/><path d="M6 7.500L11 3.500M6 7.500L12 12" stroke="#d6d6d6" stroke-width="1.300"/><path d="M12 13L13.500 9.500L9.500 10.500Z" fill="#d6d6d6"/></svg>
<svg style="left:1184px;top:281px" width="20" height="14" viewBox="0 0 20 14"><path d="M1.500 12.500V2.500H6L7.500 4.500H12" fill="none" stroke="#d6d6d6" stroke-width="1.300"/><path d="M1.500 12.500H7" stroke="#d6d6d6" stroke-width="1.300"/><circle cx="10" cy="9" r="3" fill="none" stroke="#d6d6d6" stroke-width="1.200"/><circle cx="14" cy="9" r="3" fill="none" stroke="#d6d6d6" stroke-width="1.200"/></svg>
<svg style="left:1216px;top:281px" width="18" height="14" viewBox="0 0 18 14"><g fill="#d6d6d6"><rect x="1" y="1" width="3" height="3"/><rect x="5" y="1" width="3" height="3"/><rect x="9" y="1" width="3" height="3"/><rect x="1" y="5" width="3" height="3"/><rect x="5" y="5" width="3" height="3"/><rect x="9" y="5" width="3" height="3"/><rect x="1" y="9" width="3" height="3"/><rect x="5" y="9" width="3" height="3"/><rect x="9" y="9" width="3" height="3"/></g><path d="M13 9H18L15.500 12Z" fill="#d6d6d6"/></svg>
<svg style="left:1243px;top:281px" width="18" height="14" viewBox="0 0 18 14"><rect x="3.500" y="1.500" width="11" height="11" fill="none" stroke="#646464"/><path d="M5 4.500H13M5 7.500H13M5 10.500H13" stroke="#646464"/></svg>
<svg style="left:1271px;top:281px" width="18" height="14" viewBox="0 0 18 14"><path d="M2 12V3H7L8.500 5H16V12Z" fill="#bdbdbd"/></svg>
<svg style="left:1297px;top:281px" width="18" height="14" viewBox="0 0 18 14"><path d="M4 3H14V13H7L4 10Z" fill="#646464"/></svg>
<svg style="left:1322px;top:281px" width="18" height="14" viewBox="0 0 18 14"><path d="M5 4H13L12 13H6ZM3.500 3.500H14.500M7.500 2H10.500" fill="none" stroke="#646464" stroke-width="1.200"/></svg>
<svg style="left:1356px;top:289px" width="8" height="8" viewBox="0 0 8 8"><g fill="#2e2e2e"><rect x="6" y="0" width="1" height="1"/><rect x="4" y="2" width="1" height="1"/><rect x="6" y="2" width="1" height="1"/><rect x="2" y="4" width="1" height="1"/><rect x="4" y="4" width="1" height="1"/><rect x="6" y="4" width="1" height="1"/><rect x="0" y="6" width="1" height="1"/><rect x="2" y="6" width="1" height="1"/><rect x="4" y="6" width="1" height="1"/><rect x="6" y="6" width="1" height="1"/></g></svg>
<div class="a" style="left:1126px;top:297px;width:240px;height:3px;background:#2b2b2b;"></div>
<div class="a" style="left:1126px;top:300px;width:240px;height:17px;background:#353535;"></div>
<div class="a" style="left:1126px;top:300px;width:47px;height:17px;background:#3e3e3e;"></div>
<div class="t b" style="transform:scaleX(0.976);left:1132.5px;top:303.8px;font-size:10px;color:#8a8a8a;">Kontur</div>
<div class="a" style="left:1173px;top:300px;width:1px;height:17px;background:#2c2c2c;"></div>
<div class="a" style="left:1174px;top:300px;width:59px;height:17px;background:#4a4a4a;"></div>
<svg style="left:1178px;top:304px" width="6" height="9" viewBox="0 0 6 9"><path d="M0.600 3.400L3 1L5.400 3.400M0.600 5.600L3 8L5.400 5.600" fill="none" stroke="#e6e6e6" stroke-width="1.200"/></svg>
<div class="t b" style="transform:scaleX(0.962);left:1187.3px;top:303.8px;font-size:10px;color:#ececec;">Degrade</div>
<div class="a" style="left:1233px;top:300px;width:1px;height:17px;background:#2c2c2c;"></div>
<div class="a" style="left:1234px;top:300px;width:61px;height:17px;background:#3e3e3e;"></div>
<div class="t b" style="transform:scaleX(0.964);left:1240.0px;top:303.8px;font-size:10px;color:#8a8a8a;">Saydamlık</div>
<div class="a" style="left:1295px;top:300px;width:1px;height:17px;background:#2c2c2c;"></div>
<div class="a" style="left:1347px;top:306px;border:2.500px solid transparent;border-top:3px solid #d0d0d0;border-bottom:0"></div>
<div class="a" style="left:1353px;top:305px;width:9px;height:8px;background:repeating-linear-gradient(#d4d4d4 0 1px,transparent 1px 2px)"></div>
<div class="a" style="left:1131.5px;top:324px;width:29px;height:29px;background:linear-gradient(90deg,#f4f4f4 5%,#333 95%);border:1px solid #303030;box-sizing:border-box"></div>
<div class="a" style="left:1164px;top:338px;border:3px solid transparent;border-top:4px solid #e0e0e0;border-bottom:0"></div>
<div class="t b" style="transform:scaleX(0.910);left:1194.6px;top:329.5px;font-size:10px;color:#ececec;">Tür:</div>
<div class="a" style="left:1217px;top:325px;width:142px;height:19px;background:#585858;border:1px solid #2e2e2e;box-sizing:border-box"></div>
<div class="a" style="left:1341px;top:326px;width:1px;height:17px;background:#383838"></div>
<div class="a" style="left:1346px;top:332px;border:4px solid transparent;border-top:5px solid #e6e6e6;border-bottom:0"></div>
<div class="t b" style="transform:scaleX(0.878);left:1180.6px;top:355.9px;font-size:10px;color:#7e7e7e;">Kontur:</div>
<div class="a" style="left:1217px;top:351px;width:24px;height:19px;background:#555;border:1px solid #3a3a3a;box-sizing:border-box"></div>
<svg style="left:1217px;top:351px" width="24" height="19" viewBox="0 0 24 19"><path d="M7 16V6H20" fill="none" stroke="#6e6e6e" stroke-width="2.500"/><path d="M7 16V6H20" fill="none" stroke="#7a7a7a" stroke-width="1"/></svg>
<div class="a" style="left:1240px;top:351px;width:24px;height:19px;background:#555;border:1px solid #3a3a3a;box-sizing:border-box"></div>
<svg style="left:1240px;top:351px" width="24" height="19" viewBox="0 0 24 19"><path d="M9 16V5H20" fill="none" stroke="#6e6e6e" stroke-width="2.500"/><path d="M7 16V6H20" fill="none" stroke="#7a7a7a" stroke-width="1"/></svg>
<div class="a" style="left:1263px;top:351px;width:24px;height:19px;background:#555;border:1px solid #3a3a3a;box-sizing:border-box"></div>
<svg style="left:1263px;top:351px" width="24" height="19" viewBox="0 0 24 19"><path d="M11 16V4H20" fill="none" stroke="#6e6e6e" stroke-width="2.500"/><path d="M7 16V6H20" fill="none" stroke="#7a7a7a" stroke-width="1"/></svg>
<div class="a" style="left:1132px;top:361px;width:18px;height:18px;background:#555;border:1px solid #e4e4e4;box-sizing:border-box"></div>
<div class="a" style="left:1141px;top:371px;width:19px;height:19px;background:#fff"></div>
<div class="a" style="left:1146px;top:376px;width:9px;height:9px;background:#4a4a4a;border:1px solid #222;box-sizing:border-box"></div>
<svg style="left:1141px;top:371px" width="19" height="19" viewBox="0 0 19 19"><path d="M0.500 18.500L18.500 0.500" stroke="#e0242c" stroke-width="1.800"/></svg>
<svg style="left:1197px;top:381px" width="14" height="12" viewBox="0 0 14 12"><path d="M1 10.500H12L6 3.500Z" fill="none" stroke="#7a7a7a" stroke-width="1.100"/></svg>
<div class="a" style="left:1217px;top:378px;width:53px;height:18px;background:#7c7c7c;border:1px solid #3c3c3c;box-sizing:border-box"></div>
<div class="a" style="left:1269px;top:378px;width:16px;height:18px;background:#5c5c5c;border:1px solid #3c3c3c;box-sizing:border-box"></div>
<div class="a" style="left:1273px;top:385px;border:4px solid transparent;border-top:5px solid #8a8a8a;border-bottom:0"></div>
<svg style="left:1196px;top:405px" width="16" height="16" viewBox="0 0 16 16"><ellipse cx="10" cy="8" rx="4.500" ry="3.500" fill="none" stroke="#7a7a7a" stroke-width="1.100"/><path d="M2.500 2V14M0.500 2.500H4.500M0.500 13.500H4.500M5 14.500H15" stroke="#7a7a7a" stroke-width="1"/></svg>
<div class="a" style="left:1217px;top:404px;width:53px;height:18px;background:#7c7c7c;border:1px solid #3c3c3c;box-sizing:border-box"></div>
<div class="a" style="left:1269px;top:404px;width:16px;height:18px;background:#5c5c5c;border:1px solid #3c3c3c;box-sizing:border-box"></div>
<div class="a" style="left:1273px;top:411px;border:4px solid transparent;border-top:5px solid #8a8a8a;border-bottom:0"></div>
<svg style="left:1138px;top:400px" width="16" height="16" viewBox="0 0 16 16"><rect x="1.500" y="1.500" width="6" height="5" fill="none" stroke="#686868"/><rect x="6.500" y="9.500" width="8" height="5" fill="none" stroke="#686868"/><path d="M9 4H13V7M2 12H5" fill="none" stroke="#686868"/></svg>
<div class="a" style="left:1135px;top:436px;width:196px;height:19px;background:linear-gradient(90deg,#fff 0%,#bdbdbd 40%,#6a6a6a 75%,#000 100%);border:1px solid #2e2e2e;box-sizing:border-box"></div>
<svg style="left:1341px;top:439px" width="14" height="16" viewBox="0 0 14 16"><path d="M3 4.500H11L10 14.500H4ZM1.500 4H12.500M5 2.500H9M5.500 6.500V12.500M8.500 6.500V12.500" fill="none" stroke="#646464" stroke-width="1.200"/></svg>
<div class="t b" style="transform:scaleX(0.902);left:1176.7px;top:487.7px;font-size:10px;color:#7e7e7e;">Opaklık:</div>
<div class="a" style="left:1217px;top:483px;width:53px;height:18px;background:#7c7c7c;border:1px solid #3c3c3c;box-sizing:border-box"></div>
<div class="a" style="left:1269px;top:483px;width:16px;height:18px;background:#5c5c5c;border:1px solid #3c3c3c;box-sizing:border-box"></div>
<div class="a" style="left:1273px;top:490px;border:4px solid transparent;border-top:5px solid #8a8a8a;border-bottom:0"></div>
<div class="t b" style="transform:scaleX(0.889);left:1178.7px;top:513.5px;font-size:10px;color:#7e7e7e;">Konum:</div>
<div class="a" style="left:1217px;top:509px;width:53px;height:18px;background:#7c7c7c;border:1px solid #3c3c3c;box-sizing:border-box"></div>
<div class="a" style="left:1269px;top:509px;width:16px;height:18px;background:#5c5c5c;border:1px solid #3c3c3c;box-sizing:border-box"></div>
<div class="a" style="left:1273px;top:516px;border:4px solid transparent;border-top:5px solid #8a8a8a;border-bottom:0"></div>
<svg style="left:1356px;top:526px" width="8" height="8" viewBox="0 0 8 8"><g fill="#2e2e2e"><rect x="6" y="0" width="1" height="1"/><rect x="4" y="2" width="1" height="1"/><rect x="6" y="2" width="1" height="1"/><rect x="2" y="4" width="1" height="1"/><rect x="4" y="4" width="1" height="1"/><rect x="6" y="4" width="1" height="1"/><rect x="0" y="6" width="1" height="1"/><rect x="2" y="6" width="1" height="1"/><rect x="4" y="6" width="1" height="1"/><rect x="6" y="6" width="1" height="1"/></g></svg>
<div class="a" style="left:1126px;top:533px;width:240px;height:3px;background:#2b2b2b;"></div>
<div class="a" style="left:1126px;top:536px;width:240px;height:17px;background:#353535;"></div>
<div class="a" style="left:1126px;top:536px;width:62px;height:17px;background:#4a4a4a;"></div>
<div class="t b" style="transform:scaleX(1.007);left:1132.5px;top:539.5px;font-size:10px;color:#ececec;">Kitaplıklar</div>
<div class="a" style="left:1188px;top:536px;width:1px;height:17px;background:#2c2c2c;"></div>
<div class="a" style="left:1189px;top:536px;width:58px;height:17px;background:#3e3e3e;"></div>
<div class="t b" style="transform:scaleX(0.962);left:1196.3px;top:539.5px;font-size:10px;color:#8a8a8a;">Görünüm</div>
<div class="a" style="left:1247px;top:536px;width:1px;height:17px;background:#2c2c2c;"></div>
<div class="a" style="left:1248px;top:536px;width:77px;height:17px;background:#3e3e3e;"></div>
<div class="t b" style="transform:scaleX(1.012);left:1255.2px;top:539.5px;font-size:10px;color:#8a8a8a;">Grafik Stilleri</div>
<div class="a" style="left:1325px;top:536px;width:1px;height:17px;background:#2c2c2c;"></div>
<div class="a" style="left:1126px;top:553px;width:240px;height:4px;background:#2b2b2b;"></div>
<div class="a" style="left:1126px;top:557px;width:240px;height:17px;background:#353535;"></div>
<div class="a" style="left:1126px;top:557px;width:61px;height:17px;background:#4a4a4a;"></div>
<div class="t b" style="transform:scaleX(0.961);left:1132.5px;top:560.7px;font-size:10px;color:#ececec;">Katmanlar</div>
<div class="a" style="left:1187px;top:557px;width:1px;height:17px;background:#2c2c2c;"></div>
<div class="a" style="left:1188px;top:557px;width:94px;height:17px;background:#3e3e3e;"></div>
<div class="t b" style="transform:scaleX(0.940);left:1195.0px;top:560.7px;font-size:10px;color:#8a8a8a;">Çalışma Yüzeyleri</div>
<div class="a" style="left:1282px;top:557px;width:1px;height:17px;background:#2c2c2c;"></div>
<div class="a" style="left:1347px;top:563px;border:2.500px solid transparent;border-top:3px solid #d0d0d0;border-bottom:0"></div>
<div class="a" style="left:1353px;top:562px;width:9px;height:8px;background:repeating-linear-gradient(#d4d4d4 0 1px,transparent 1px 2px)"></div>
<div class="a" style="left:1130px;top:579.500px;width:231px;height:128px;background:#484848;border:1px solid #333;box-sizing:border-box"></div>
<div class="a" style="left:1131px;top:581.0px;width:229px;height:20px;background:#636f83"></div>
<div class="a" style="left:1131px;top:601.0px;width:229px;height:1px;background:#3a3a3a"></div>
<svg style="left:1134px;top:586.0px" width="13" height="10" viewBox="0 0 13 10"><path d="M0.500 5C3 0.800 10 0.800 12.500 5C10 9.200 3 9.200 0.500 5Z" fill="#c4c4c4"/><circle cx="6.500" cy="4.800" r="2.700" fill="#3c3c3c"/><circle cx="7.400" cy="3.800" r=".9" fill="#d8d8d8"/></svg>
<div class="a" style="left:1173.500px;top:581.0px;width:4.500px;height:20px;background:#5a80e0"></div>
<div class="a" style="left:1200.5px;top:582.5px;width:17.500px;height:17px;background:#fff;border:1px solid #222;box-sizing:border-box"></div>
<div class="a" style="left:1183px;top:589.0px;border:4.500px solid transparent;border-top:6px solid #e8e8e8;border-bottom:0"></div>
<svg style="left:1202px;top:585.0px" width="14" height="12" viewBox="0 0 14 12"><path d="M1 4C2.500 9 3.500 9 4.500 4" fill="none" stroke="#e53" stroke-width="1"/><path d="M5 4C6.500 9 7.500 9 8.500 4" fill="none" stroke="#3a5" stroke-width="1"/><path d="M9 4C10.500 9 11.500 9 12.500 4" fill="none" stroke="#36c" stroke-width="1"/><path d="M2 10.500H12" stroke="#666" stroke-width="1"/></svg>
<div class="t b" style="transform:scaleX(0.950);left:1223.0px;top:587.0px;font-size:10px;color:#f0f0f0;">katman 1</div>
<svg style="left:1329px;top:586.0px" width="10" height="10" viewBox="0 0 10 10"><circle cx="5" cy="5" r="3.800" fill="#606060" stroke="#c6c6c6" stroke-width="1.200"/></svg>
<div class="a" style="left:1131px;top:601.5px;width:229px;height:20px;background:#575757"></div>
<div class="a" style="left:1131px;top:621.5px;width:229px;height:1px;background:#3a3a3a"></div>
<svg style="left:1134px;top:606.5px" width="13" height="10" viewBox="0 0 13 10"><path d="M0.500 5C3 0.800 10 0.800 12.500 5C10 9.200 3 9.200 0.500 5Z" fill="#c4c4c4"/><circle cx="6.500" cy="4.800" r="2.700" fill="#3c3c3c"/><circle cx="7.400" cy="3.800" r=".9" fill="#d8d8d8"/></svg>
<div class="a" style="left:1173.500px;top:601.5px;width:4.500px;height:20px;background:#5a80e0"></div>
<div class="a" style="left:1220.5px;top:603.0px;width:17.500px;height:17px;background:#fff;border:1px solid #222;box-sizing:border-box"></div>
<div class="a" style="left:1203px;top:607.5px;border:4.500px solid transparent;border-left:6px solid #e8e8e8;border-right:0"></div>
<div class="t b" style="transform:scaleX(1.003);left:1243.3px;top:607.5px;font-size:10px;color:#f0f0f0;">&lt;Grup&gt;</div>
<svg style="left:1222px;top:604.5px" width="14" height="14" viewBox="0 0 14 14"><circle cx="7" cy="7" r="5.800" fill="none" stroke="#333" stroke-width="1.200"/></svg>
<div class="t" style="left:1226.200px;top:608.0px;font-size:8.500px;color:#2a2a2a">R</div>
<svg style="left:1329px;top:606.5px" width="10" height="10" viewBox="0 0 10 10"><circle cx="5" cy="5" r="3.800" fill="#606060" stroke="#c6c6c6" stroke-width="1.200"/></svg>
<div class="a" style="left:1131px;top:622.5px;width:229px;height:20px;background:#575757"></div>
<div class="a" style="left:1131px;top:642.5px;width:229px;height:1px;background:#3a3a3a"></div>
<svg style="left:1134px;top:627.5px" width="13" height="10" viewBox="0 0 13 10"><path d="M0.500 5C3 0.800 10 0.800 12.500 5C10 9.200 3 9.200 0.500 5Z" fill="#c4c4c4"/><circle cx="6.500" cy="4.800" r="2.700" fill="#3c3c3c"/><circle cx="7.400" cy="3.800" r=".9" fill="#d8d8d8"/></svg>
<div class="a" style="left:1173.500px;top:622.5px;width:4.500px;height:20px;background:#5a80e0"></div>
<div class="a" style="left:1220.5px;top:624.0px;width:17.500px;height:17px;background:#fff;border:1px solid #222;box-sizing:border-box"></div>
<div class="a" style="left:1203px;top:628.5px;border:4.500px solid transparent;border-left:6px solid #e8e8e8;border-right:0"></div>
<div class="t b" style="transform:scaleX(1.003);left:1243.3px;top:628.5px;font-size:10px;color:#f0f0f0;">&lt;Grup&gt;</div>
<div class="a" style="left:1223px;top:632.5px;width:12px;height:1px;background:#555"></div>
<svg style="left:1329px;top:627.5px" width="10" height="10" viewBox="0 0 10 10"><circle cx="5" cy="5" r="3.800" fill="#606060" stroke="#c6c6c6" stroke-width="1.200"/></svg>
<div class="a" style="left:1131px;top:643.5px;width:229px;height:20px;background:#575757"></div>
<div class="a" style="left:1131px;top:663.5px;width:229px;height:1px;background:#3a3a3a"></div>
<svg style="left:1134px;top:648.5px" width="13" height="10" viewBox="0 0 13 10"><path d="M0.500 5C3 0.800 10 0.800 12.500 5C10 9.200 3 9.200 0.500 5Z" fill="#c4c4c4"/><circle cx="6.500" cy="4.800" r="2.700" fill="#3c3c3c"/><circle cx="7.400" cy="3.800" r=".9" fill="#d8d8d8"/></svg>
<div class="a" style="left:1173.500px;top:643.5px;width:4.500px;height:20px;background:#5a80e0"></div>
<div class="a" style="left:1220.5px;top:645.0px;width:17.500px;height:17px;background:#fff;border:1px solid #222;box-sizing:border-box"></div>
<div class="a" style="left:1203px;top:649.5px;border:4.500px solid transparent;border-left:6px solid #e8e8e8;border-right:0"></div>
<div class="t b" style="transform:scaleX(1.003);left:1243.3px;top:649.5px;font-size:10px;color:#f0f0f0;">&lt;Grup&gt;</div>
<svg style="left:1222px;top:647.5px" width="14" height="12" viewBox="0 0 14 12"><path d="M1 3C2.500 9 3.500 9 4.500 3" fill="none" stroke="#e53" stroke-width="1"/><path d="M5 3C6.500 9 7.500 9 8.500 3" fill="none" stroke="#3a5" stroke-width="1"/><path d="M9 3C10.500 9 11.500 9 12.500 3" fill="none" stroke="#36c" stroke-width="1"/></svg>
<svg style="left:1329px;top:648.5px" width="10" height="10" viewBox="0 0 10 10"><circle cx="5" cy="5" r="3.800" fill="#606060" stroke="#c6c6c6" stroke-width="1.200"/></svg>
<div class="a" style="left:1151px;top:581px;width:1px;height:83px;background:#3a3a3a"></div>
<div class="a" style="left:1172px;top:581px;width:1px;height:83px;background:#3a3a3a"></div>
<div class="a" style="left:1324px;top:581px;width:1px;height:83px;background:#3a3a3a"></div>
<div class="a" style="left:1352px;top:581px;border:4px solid transparent;border-top:4px solid #f0f0f0;border-right:4px solid #f0f0f0;border-bottom:0;border-left:4px solid transparent;width:0;height:0"></div>
<div class="t b" style="transform:scaleX(0.924);left:1130.0px;top:713.5px;font-size:10px;color:#e8e8e8;">1 Katman</div>
<svg style="left:1219px;top:711px" width="18" height="14" viewBox="0 0 18 14"><circle cx="10" cy="5.500" r="3.500" fill="none" stroke="#646464" stroke-width="1.300"/><path d="M7.500 8L3.500 12.500" stroke="#646464" stroke-width="1.800"/></svg>
<svg style="left:1245px;top:711px" width="18" height="14" viewBox="0 0 18 14"><rect x="3.500" y="1.500" width="9" height="9" fill="none" stroke="#d6d6d6" stroke-width="1.200"/><rect x="7" y="5" width="8" height="8" fill="#9a9a9a" stroke="#d6d6d6"/></svg>
<svg style="left:1271px;top:711px" width="18" height="14" viewBox="0 0 18 14"><path d="M1 2H5V5H8" fill="none" stroke="#d6d6d6" stroke-width="1.300"/><path d="M7 4H16V13H10L7 10Z" fill="#d6d6d6"/></svg>
<svg style="left:1297px;top:711px" width="18" height="14" viewBox="0 0 18 14"><path d="M4 2H15V13H8L4 9Z" fill="#d6d6d6"/><path d="M4 9H8V13" fill="none" stroke="#4a4a4a" stroke-width="1"/></svg>
<svg style="left:1322px;top:711px" width="18" height="14" viewBox="0 0 18 14"><path d="M5 4H13L12 13H6ZM3.500 3.500H14.500M7.500 2H10.500M7.500 6V11M10.500 6V11" fill="none" stroke="#646464" stroke-width="1.200"/></svg>
</body></html>
